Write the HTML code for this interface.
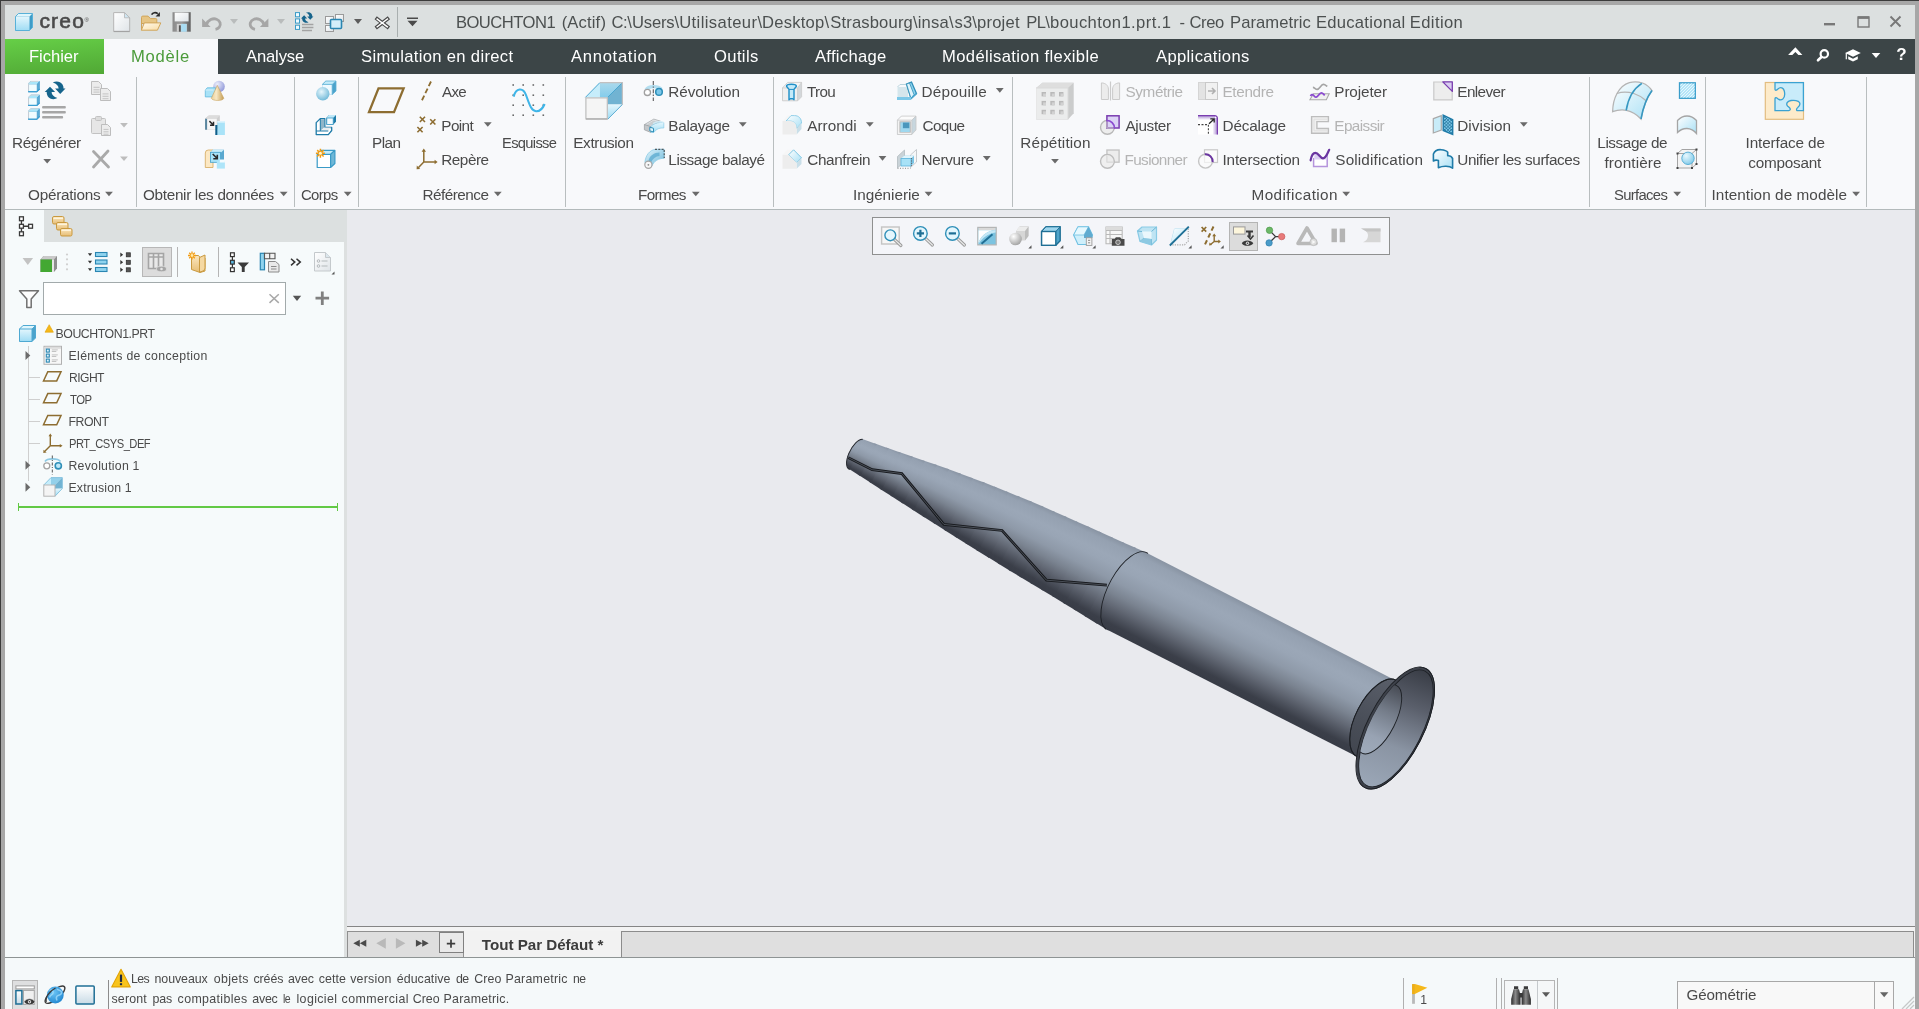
<!DOCTYPE html>
<html lang="fr"><head><meta charset="utf-8"><title>Creo Parametric</title>
<style>
html,body{margin:0;padding:0;}
body{width:1919px;height:1009px;overflow:hidden;position:relative;background:#a7a7a7;font-family:"Liberation Sans",sans-serif;}
.a{position:absolute;}
.t{position:absolute;white-space:pre;line-height:20px;height:20px;}
svg{position:absolute;left:0;top:0;}
</style></head><body>
<div class="a" style="left:0px;top:0px;width:1919px;height:1px;background:#3b3b3b;"></div>
<div class="a" style="left:0px;top:0px;width:1px;height:1009px;background:#3b3b3b;"></div>
<div class="a" style="left:5px;top:5px;width:1910px;height:34px;background:#dce0e0;"></div>
<div class="a" style="left:5px;top:39px;width:1910px;height:35px;background:#3c4547;"></div>
<div class="a" style="left:5px;top:39px;width:99px;height:35px;background:linear-gradient(175deg,#66cf47 0%,#5bbb3e 50%,#51a835 100%);"></div>
<div class="a" style="left:104px;top:39px;width:114px;height:36px;background:#f8f9fb;"></div>
<div class="a" style="left:5px;top:74px;width:1910px;height:135px;background:#f8f9fb;"></div>
<div class="a" style="left:5px;top:209px;width:1910px;height:1px;background:#b3babb;"></div>
<div class="a" style="left:136px;top:77px;width:1px;height:130px;background:#b9bebf;"></div>
<div class="a" style="left:294px;top:77px;width:1px;height:130px;background:#b9bebf;"></div>
<div class="a" style="left:358px;top:77px;width:1px;height:130px;background:#b9bebf;"></div>
<div class="a" style="left:565px;top:77px;width:1px;height:130px;background:#b9bebf;"></div>
<div class="a" style="left:773px;top:77px;width:1px;height:130px;background:#b9bebf;"></div>
<div class="a" style="left:1012px;top:77px;width:1px;height:130px;background:#b9bebf;"></div>
<div class="a" style="left:1589px;top:77px;width:1px;height:130px;background:#b9bebf;"></div>
<div class="a" style="left:1705px;top:77px;width:1px;height:130px;background:#b9bebf;"></div>
<div class="a" style="left:1866px;top:77px;width:1px;height:130px;background:#b9bebf;"></div>
<div class="a" style="left:5px;top:210px;width:340px;height:748px;background:#f6fafb;"></div>
<div class="a" style="left:44px;top:210px;width:303px;height:32px;background:#dce0e0;"></div>
<div class="a" style="left:344px;top:242px;width:3px;height:716px;background:#dde0e0;"></div>
<div class="a" style="left:347px;top:210px;width:1568px;height:716px;background:#e9eaee;"></div>
<div class="a" style="left:872px;top:217px;width:518px;height:38px;background:#f4f5f9;border:1px solid #8f9090;box-sizing:border-box;"></div>
<div class="a" style="left:1229px;top:222px;width:29px;height:29px;background:#dcdcdc;border:1px solid #b4b4b4;box-sizing:border-box;"></div>
<div class="a" style="left:142px;top:247px;width:30px;height:30px;background:#dcdcdc;border:1px solid #b7b7b7;box-sizing:border-box;"></div>
<div class="a" style="left:177px;top:247px;width:1px;height:30px;background:#b5b5b5;"></div>
<div class="a" style="left:218px;top:247px;width:1px;height:30px;background:#b5b5b5;"></div>
<div class="a" style="left:43px;top:282px;width:243px;height:33px;background:#ffffff;border:1px solid #a2aaab;box-sizing:border-box;"></div>
<div class="a" style="left:28px;top:346px;width:1px;height:135px;background:#cfcfcf;"></div>
<div class="a" style="left:28px;top:377px;width:12px;height:1px;background:#cfcfcf;"></div>
<div class="a" style="left:28px;top:399px;width:12px;height:1px;background:#cfcfcf;"></div>
<div class="a" style="left:28px;top:421px;width:12px;height:1px;background:#cfcfcf;"></div>
<div class="a" style="left:28px;top:443px;width:12px;height:1px;background:#cfcfcf;"></div>
<div class="a" style="left:18px;top:506px;width:320px;height:2px;background:#62c945;"></div>
<div class="a" style="left:18px;top:503px;width:1px;height:8px;background:#62c945;"></div>
<div class="a" style="left:337px;top:503px;width:1px;height:8px;background:#62c945;"></div>
<div class="a" style="left:347px;top:926px;width:1568px;height:1px;background:#858585;"></div>
<div class="a" style="left:347px;top:927px;width:1568px;height:4px;background:#f3f3f3;"></div>
<div class="a" style="left:347px;top:931px;width:1568px;height:27px;background:#f2f2f2;"></div>
<div class="a" style="left:347px;top:931px;width:117px;height:27px;background:#dedede;border:1px solid #909090;border-bottom:none;box-sizing:border-box;"></div>
<div class="a" style="left:439px;top:932px;width:25px;height:21px;background:#e9e9e9;border:1px solid #808080;box-sizing:border-box;"></div>
<div class="a" style="left:621px;top:931px;width:1293px;height:27px;background:#dfdfdf;border:1px solid #8c8c8c;border-bottom:none;box-sizing:border-box;"></div>
<div class="a" style="left:5px;top:957px;width:1910px;height:1px;background:#8e9494;"></div>
<div class="a" style="left:5px;top:958px;width:1910px;height:51px;background:#f5f9fa;"></div>
<div class="a" style="left:12px;top:980px;width:26px;height:29px;background:#dedfe0;border:1px solid #b5b5b5;border-bottom:none;box-sizing:border-box;"></div>
<div class="a" style="left:108px;top:980px;width:1px;height:29px;background:#8c8c8c;"></div>
<div class="a" style="left:1403px;top:978px;width:1px;height:31px;background:#b0b0b0;"></div>
<div class="a" style="left:1496px;top:978px;width:1px;height:31px;background:#b0b0b0;"></div>
<div class="a" style="left:1501px;top:978px;width:1px;height:31px;background:#b0b0b0;"></div>
<div class="a" style="left:1504px;top:980px;width:51px;height:29px;background:#f5f7f8;border:1px solid #b5b5b5;border-bottom:none;box-sizing:border-box;"></div>
<div class="a" style="left:1537px;top:981px;width:1px;height:28px;background:#c5c9cc;"></div>
<div class="a" style="left:1557px;top:978px;width:1px;height:31px;background:#b0b0b0;"></div>
<div class="a" style="left:1677px;top:981px;width:217px;height:28px;background:#f8f8f8;border:1px solid #a8a8a8;border-bottom:none;box-sizing:border-box;"></div>
<div class="a" style="left:1874px;top:982px;width:1px;height:27px;background:#a8a8a8;"></div>
<div class="a" id="txt" style="left:0;top:0;width:1919px;height:1009px;will-change:transform;">
<span class="t" style="left:455.90px;top:12.80px;font-size:16.6px;color:#4c5050;letter-spacing:-0.519px;">BOUCHTON1</span>
<span class="t" style="left:561.70px;top:12.80px;font-size:16.6px;color:#4c5050;letter-spacing:0.150px;">(Actif)</span>
<span class="t" style="left:611.40px;top:12.80px;font-size:16.6px;color:#4c5050;letter-spacing:-0.397px;">C:\</span>
<span class="t" style="left:631.90px;top:12.80px;font-size:16.6px;color:#4c5050;letter-spacing:-0.146px;">Users\</span>
<span class="t" style="left:679.20px;top:12.80px;font-size:16.6px;color:#4c5050;letter-spacing:0.402px;">Utilisateur\</span>
<span class="t" style="left:762.10px;top:12.80px;font-size:16.6px;color:#4c5050;letter-spacing:0.218px;">Desktop\</span>
<span class="t" style="left:830.20px;top:12.80px;font-size:16.6px;color:#4c5050;letter-spacing:0.163px;">Strasbourg\</span>
<span class="t" style="left:917.70px;top:12.80px;font-size:16.6px;color:#4c5050;letter-spacing:0.190px;">insa\</span>
<span class="t" style="left:954.60px;top:12.80px;font-size:16.6px;color:#4c5050;letter-spacing:0.087px;">s3\</span>
<span class="t" style="left:977.00px;top:12.80px;font-size:16.6px;color:#4c5050;letter-spacing:0.200px;">projet</span>
<span class="t" style="left:1026.20px;top:12.80px;font-size:16.6px;color:#4c5050;letter-spacing:-0.598px;">PL\</span>
<span class="t" style="left:1050.00px;top:12.80px;font-size:16.6px;color:#4c5050;letter-spacing:0.400px;">bouchton1.prt.1</span>
<span class="t" style="left:1179.40px;top:12.80px;font-size:16.6px;color:#4c5050;letter-spacing:0.000px;">-</span>
<span class="t" style="left:1189.50px;top:12.80px;font-size:16.6px;color:#4c5050;letter-spacing:-0.379px;">Creo</span>
<span class="t" style="left:1230.00px;top:12.80px;font-size:16.6px;color:#4c5050;letter-spacing:0.075px;">Parametric</span>
<span class="t" style="left:1316.00px;top:12.80px;font-size:16.6px;color:#4c5050;letter-spacing:0.257px;">Educational</span>
<span class="t" style="left:1409.80px;top:12.80px;font-size:16.6px;color:#4c5050;letter-spacing:0.382px;">Edition</span>
<span class="t" style="left:39.40px;top:10.60px;font-size:21px;color:#4a4a4a;letter-spacing:1.209px;-webkit-text-stroke:0.6px #4a4a4a;">creo</span>
<span class="t" style="left:84.60px;top:9.50px;font-size:6px;color:#4a4a4a;letter-spacing:0.000px;">®</span>
<span class="t" style="left:1896.30px;top:45.20px;font-size:17px;color:#ffffff;letter-spacing:0.000px;font-weight:700;">?</span>
<span class="t" style="left:29.00px;top:47.40px;font-size:16.6px;color:#ffffff;letter-spacing:-0.044px;">Fichier</span>
<span class="t" style="left:131.00px;top:47.40px;font-size:16.6px;color:#4b9b3a;letter-spacing:0.761px;">Modèle</span>
<span class="t" style="left:246.00px;top:47.40px;font-size:16.6px;color:#ffffff;letter-spacing:-0.134px;">Analyse</span>
<span class="t" style="left:361.00px;top:47.40px;font-size:16.6px;color:#ffffff;letter-spacing:0.336px;">Simulation en direct</span>
<span class="t" style="left:571.00px;top:47.40px;font-size:16.6px;color:#ffffff;letter-spacing:0.709px;">Annotation</span>
<span class="t" style="left:714.00px;top:47.40px;font-size:16.6px;color:#ffffff;letter-spacing:0.376px;">Outils</span>
<span class="t" style="left:815.00px;top:47.40px;font-size:16.6px;color:#ffffff;letter-spacing:0.293px;">Affichage</span>
<span class="t" style="left:942.00px;top:47.40px;font-size:16.6px;color:#ffffff;letter-spacing:0.365px;">Modélisation flexible</span>
<span class="t" style="left:1156.00px;top:47.40px;font-size:16.6px;color:#ffffff;letter-spacing:0.347px;">Applications</span>
<span class="t" style="left:12.00px;top:132.50px;font-size:15.3px;color:#4a4a4a;letter-spacing:-0.398px;">Régénérer</span>
<span class="t" style="left:28.00px;top:184.50px;font-size:15.3px;color:#4a4a4a;letter-spacing:-0.242px;">Opérations</span>
<span class="t" style="left:143.00px;top:184.50px;font-size:15.3px;color:#4a4a4a;letter-spacing:-0.320px;">Obtenir les données</span>
<span class="t" style="left:301.00px;top:184.50px;font-size:15.3px;color:#4a4a4a;letter-spacing:-0.689px;transform:scaleX(0.9765);transform-origin:0 50%;">Corps</span>
<span class="t" style="left:372.00px;top:132.50px;font-size:15.3px;color:#4a4a4a;letter-spacing:-0.536px;">Plan</span>
<span class="t" style="left:442.30px;top:81.60px;font-size:15.3px;color:#4a4a4a;letter-spacing:-0.689px;transform:scaleX(0.9888);transform-origin:0 50%;">Axe</span>
<span class="t" style="left:441.30px;top:115.50px;font-size:15.3px;color:#4a4a4a;letter-spacing:-0.604px;">Point</span>
<span class="t" style="left:441.30px;top:149.50px;font-size:15.3px;color:#4a4a4a;letter-spacing:-0.493px;">Repère</span>
<span class="t" style="left:501.84px;top:132.50px;font-size:15.3px;color:#4a4a4a;letter-spacing:-0.689px;transform:scaleX(0.9598);transform-origin:0 50%;">Esquisse</span>
<span class="t" style="left:422.50px;top:184.50px;font-size:15.3px;color:#4a4a4a;letter-spacing:-0.509px;">Référence</span>
<span class="t" style="left:573.30px;top:132.50px;font-size:15.3px;color:#4a4a4a;letter-spacing:-0.382px;">Extrusion</span>
<span class="t" style="left:668.30px;top:81.60px;font-size:15.3px;color:#4a4a4a;letter-spacing:-0.064px;">Révolution</span>
<span class="t" style="left:668.30px;top:115.50px;font-size:15.3px;color:#4a4a4a;letter-spacing:-0.297px;">Balayage</span>
<span class="t" style="left:668.30px;top:149.50px;font-size:15.3px;color:#4a4a4a;letter-spacing:-0.411px;">Lissage balayé</span>
<span class="t" style="left:638.30px;top:184.50px;font-size:15.3px;color:#4a4a4a;letter-spacing:-0.689px;transform:scaleX(0.9989);transform-origin:0 50%;">Formes</span>
<span class="t" style="left:807.30px;top:81.60px;font-size:15.3px;color:#4a4a4a;letter-spacing:-0.689px;transform:scaleX(0.9960);transform-origin:0 50%;">Trou</span>
<span class="t" style="left:807.30px;top:115.50px;font-size:15.3px;color:#4a4a4a;letter-spacing:0.014px;">Arrondi</span>
<span class="t" style="left:807.30px;top:149.50px;font-size:15.3px;color:#4a4a4a;letter-spacing:-0.390px;">Chanfrein</span>
<span class="t" style="left:921.50px;top:81.60px;font-size:15.3px;color:#4a4a4a;letter-spacing:0.191px;">Dépouille</span>
<span class="t" style="left:922.50px;top:115.50px;font-size:15.3px;color:#4a4a4a;letter-spacing:-0.642px;">Coque</span>
<span class="t" style="left:921.50px;top:149.50px;font-size:15.3px;color:#4a4a4a;letter-spacing:-0.316px;">Nervure</span>
<span class="t" style="left:853.00px;top:184.50px;font-size:15.3px;color:#4a4a4a;letter-spacing:-0.042px;">Ingénierie</span>
<span class="t" style="left:1020.30px;top:132.50px;font-size:15.3px;color:#4a4a4a;letter-spacing:0.147px;">Répétition</span>
<span class="t" style="left:1125.50px;top:81.60px;font-size:15.3px;color:#b4b4b4;letter-spacing:-0.406px;">Symétrie</span>
<span class="t" style="left:1125.50px;top:115.50px;font-size:15.3px;color:#4a4a4a;letter-spacing:-0.336px;">Ajuster</span>
<span class="t" style="left:1124.50px;top:149.50px;font-size:15.3px;color:#b4b4b4;letter-spacing:-0.616px;">Fusionner</span>
<span class="t" style="left:1222.50px;top:81.60px;font-size:15.3px;color:#b4b4b4;letter-spacing:-0.345px;">Etendre</span>
<span class="t" style="left:1222.50px;top:115.50px;font-size:15.3px;color:#4a4a4a;letter-spacing:-0.160px;">Décalage</span>
<span class="t" style="left:1222.50px;top:149.50px;font-size:15.3px;color:#4a4a4a;letter-spacing:-0.143px;">Intersection</span>
<span class="t" style="left:1334.30px;top:81.60px;font-size:15.3px;color:#4a4a4a;letter-spacing:-0.110px;">Projeter</span>
<span class="t" style="left:1334.30px;top:115.50px;font-size:15.3px;color:#b4b4b4;letter-spacing:-0.587px;">Epaissir</span>
<span class="t" style="left:1335.30px;top:149.50px;font-size:15.3px;color:#4a4a4a;letter-spacing:0.141px;">Solidification</span>
<span class="t" style="left:1457.30px;top:81.60px;font-size:15.3px;color:#4a4a4a;letter-spacing:-0.595px;">Enlever</span>
<span class="t" style="left:1457.30px;top:115.50px;font-size:15.3px;color:#4a4a4a;letter-spacing:0.022px;">Division</span>
<span class="t" style="left:1457.30px;top:149.50px;font-size:15.3px;color:#4a4a4a;letter-spacing:-0.380px;">Unifier les surfaces</span>
<span class="t" style="left:1251.50px;top:184.50px;font-size:15.3px;color:#4a4a4a;letter-spacing:0.399px;">Modification</span>
<span class="t" style="left:1597.30px;top:132.50px;font-size:15.3px;color:#4a4a4a;letter-spacing:-0.420px;">Lissage de</span>
<span class="t" style="left:1604.50px;top:152.50px;font-size:15.3px;color:#4a4a4a;letter-spacing:0.111px;">frontière</span>
<span class="t" style="left:1614.30px;top:184.50px;font-size:15.3px;color:#4a4a4a;letter-spacing:-0.689px;transform:scaleX(0.9696);transform-origin:0 50%;">Surfaces</span>
<span class="t" style="left:1745.50px;top:132.50px;font-size:15.3px;color:#4a4a4a;letter-spacing:-0.116px;">Interface de</span>
<span class="t" style="left:1748.30px;top:152.50px;font-size:15.3px;color:#4a4a4a;letter-spacing:-0.235px;">composant</span>
<span class="t" style="left:1711.50px;top:184.50px;font-size:15.3px;color:#4a4a4a;letter-spacing:0.063px;">Intention de modèle</span>
<span class="t" style="left:55.50px;top:324.10px;font-size:12.3px;color:#4a4a4a;letter-spacing:-0.438px;">BOUCHTON1.PRT</span>
<span class="t" style="left:68.50px;top:345.90px;font-size:12.3px;color:#4a4a4a;letter-spacing:0.361px;">Eléments de conception</span>
<span class="t" style="left:68.51px;top:367.80px;font-size:12.3px;color:#4a4a4a;letter-spacing:-0.553px;transform:scaleX(0.9851);transform-origin:0 50%;">RIGHT</span>
<span class="t" style="left:69.50px;top:389.70px;font-size:12.3px;color:#4a4a4a;letter-spacing:-0.553px;transform:scaleX(0.9222);transform-origin:0 50%;">TOP</span>
<span class="t" style="left:68.50px;top:411.60px;font-size:12.3px;color:#4a4a4a;letter-spacing:-0.459px;">FRONT</span>
<span class="t" style="left:68.59px;top:433.70px;font-size:12.3px;color:#4a4a4a;letter-spacing:-0.553px;transform:scaleX(0.9070);transform-origin:0 50%;">PRT_CSYS_DEF</span>
<span class="t" style="left:68.50px;top:455.60px;font-size:12.3px;color:#4a4a4a;letter-spacing:0.235px;">Revolution 1</span>
<span class="t" style="left:68.50px;top:477.60px;font-size:12.3px;color:#4a4a4a;letter-spacing:0.152px;">Extrusion 1</span>
<span class="t" style="left:481.80px;top:934.50px;font-size:15.2px;color:#3c3c3c;letter-spacing:-0.029px;font-weight:700;">Tout Par Défaut *</span>
<span class="t" style="left:130.70px;top:968.60px;font-size:12.4px;color:#4a4a4a;letter-spacing:-0.558px;transform:scaleX(0.9963);transform-origin:0 50%;">Les</span>
<span class="t" style="left:154.50px;top:968.60px;font-size:12.4px;color:#4a4a4a;letter-spacing:-0.063px;">nouveaux</span>
<span class="t" style="left:213.80px;top:968.60px;font-size:12.4px;color:#4a4a4a;letter-spacing:0.326px;">objets</span>
<span class="t" style="left:253.50px;top:968.60px;font-size:12.4px;color:#4a4a4a;letter-spacing:-0.101px;">créés</span>
<span class="t" style="left:288.00px;top:968.60px;font-size:12.4px;color:#4a4a4a;letter-spacing:-0.059px;">avec</span>
<span class="t" style="left:318.70px;top:968.60px;font-size:12.4px;color:#4a4a4a;letter-spacing:0.082px;">cette</span>
<span class="t" style="left:350.20px;top:968.60px;font-size:12.4px;color:#4a4a4a;letter-spacing:0.208px;">version</span>
<span class="t" style="left:396.70px;top:968.60px;font-size:12.4px;color:#4a4a4a;letter-spacing:0.081px;">éducative</span>
<span class="t" style="left:455.70px;top:968.60px;font-size:12.4px;color:#4a4a4a;letter-spacing:-0.558px;transform:scaleX(0.9975);transform-origin:0 50%;">de</span>
<span class="t" style="left:474.20px;top:968.60px;font-size:12.4px;color:#4a4a4a;letter-spacing:0.112px;">Creo</span>
<span class="t" style="left:505.50px;top:968.60px;font-size:12.4px;color:#4a4a4a;letter-spacing:0.233px;">Parametric</span>
<span class="t" style="left:572.50px;top:968.60px;font-size:12.4px;color:#4a4a4a;letter-spacing:-0.558px;transform:scaleX(0.9825);transform-origin:0 50%;">ne</span>
<span class="t" style="left:111.50px;top:988.70px;font-size:12.4px;color:#4a4a4a;letter-spacing:0.161px;">seront</span>
<span class="t" style="left:152.60px;top:988.70px;font-size:12.4px;color:#4a4a4a;letter-spacing:-0.141px;">pas</span>
<span class="t" style="left:177.60px;top:988.70px;font-size:12.4px;color:#4a4a4a;letter-spacing:0.348px;">compatibles</span>
<span class="t" style="left:252.20px;top:988.70px;font-size:12.4px;color:#4a4a4a;letter-spacing:-0.192px;">avec</span>
<span class="t" style="left:282.80px;top:988.70px;font-size:12.4px;color:#4a4a4a;letter-spacing:-0.558px;transform:scaleX(0.8483);transform-origin:0 50%;">le</span>
<span class="t" style="left:296.50px;top:988.70px;font-size:12.4px;color:#4a4a4a;letter-spacing:0.368px;">logiciel</span>
<span class="t" style="left:341.60px;top:988.70px;font-size:12.4px;color:#4a4a4a;letter-spacing:0.390px;">commercial</span>
<span class="t" style="left:412.70px;top:988.70px;font-size:12.4px;color:#4a4a4a;letter-spacing:0.012px;">Creo</span>
<span class="t" style="left:443.60px;top:988.70px;font-size:12.4px;color:#4a4a4a;letter-spacing:0.220px;">Parametric.</span>
<span class="t" style="left:1686.50px;top:985.30px;font-size:15.2px;color:#4a4a4a;letter-spacing:-0.119px;">Géométrie</span>
<span class="t" style="left:1420.30px;top:989.70px;font-size:12.2px;color:#4a4a4a;letter-spacing:0.000px;">1</span>
</div>
<svg width="1919" height="1009" viewBox="0 0 1919 1009"><defs>
<linearGradient id="gb" x1="0" y1="0" x2="0" y2="1"><stop offset="0" stop-color="#e3f6fd"/><stop offset="1" stop-color="#9fdcf4"/></linearGradient>
<linearGradient id="gb2" x1="0" y1="0" x2="1" y2="1"><stop offset="0" stop-color="#ffffff"/><stop offset="1" stop-color="#a9e0f5"/></linearGradient>
<linearGradient id="gB" x1="0" y1="0" x2="0" y2="1"><stop offset="0" stop-color="#7cc6e6"/><stop offset="1" stop-color="#3d97c2"/></linearGradient>
<linearGradient id="gw" x1="0" y1="0" x2="1" y2="1"><stop offset="0" stop-color="#ffffff"/><stop offset="1" stop-color="#dfe4e8"/></linearGradient>
<linearGradient id="gg" x1="0" y1="0" x2="0" y2="1"><stop offset="0" stop-color="#f4f4f4"/><stop offset="1" stop-color="#d2d2d2"/></linearGradient>
<linearGradient id="gt" x1="0" y1="0" x2="0" y2="1"><stop offset="0" stop-color="#fbe7c0"/><stop offset="1" stop-color="#e6bd74"/></linearGradient>
<linearGradient id="gp" x1="0" y1="0" x2="1" y2="0"><stop offset="0" stop-color="#ffffff"/><stop offset="1" stop-color="#b89ad8"/></linearGradient>
<radialGradient id="gs" cx="0.35" cy="0.3" r="0.8"><stop offset="0" stop-color="#e8f8fe"/><stop offset="1" stop-color="#7cc8e8"/></radialGradient>
<radialGradient id="gsg" cx="0.35" cy="0.3" r="0.8"><stop offset="0" stop-color="#ffffff"/><stop offset="1" stop-color="#9a9a9a"/></radialGradient>
<linearGradient id="mBody" gradientUnits="userSpaceOnUse" x1="0" y1="-40" x2="0" y2="40">
 <stop offset="0" stop-color="#8a95a4"/><stop offset="0.25" stop-color="#9ba7b7"/><stop offset="0.45" stop-color="#8f9aaa"/><stop offset="0.72" stop-color="#4a4f5a"/><stop offset="0.86" stop-color="#3a3e48"/><stop offset="1" stop-color="#4d525d"/></linearGradient>
</defs>
<g transform="translate(15,13)"><path d="M0.5 3.5L3.5 0.5H17.5V14.5L14.5 17.5H0.5z" fill="#3f9cc7"/><path d="M0.5 3.5L3.5 0.5H17.5L14.5 3.5z" fill="#dff6fd"/><rect x="0.5" y="3.5" width="14" height="14" fill="url(#gb)"/><path d="M0.5 3.5L3.5 0.5H17.5V14.5L14.5 17.5H0.5z" fill="none" stroke="#58b1d8" stroke-width="1"/></g>
<path d="M113.700 12.600H124.500L129.700 17.800V31.300H113.700z" fill="url(#gw)" stroke="#b4b4b4" stroke-width="1"/><path d="M124.500 12.600V17.800H129.700z" fill="#cfe6f2" stroke="#b4b4b4" stroke-width=".8"/><path d="M113.700 31.600H129.700" stroke="#a0a0a0" stroke-width="1"/>
<path d="M141.500 30.200V17.400Q141.500 16.100 142.800 16.100H148L150.500 18.600H155.800Q156.800 18.600 156.800 19.600V23.500H141.500z" fill="#e6c585" stroke="#d0a55a" stroke-width="1"/><linearGradient id="gfl" x1="0" y1="0" x2="1" y2="1"><stop offset="0" stop-color="#fffaee"/><stop offset="1" stop-color="#f8dca4"/></linearGradient><path d="M144.300 22.900H160.800L157.400 30.200H141.400z" fill="url(#gfl)" stroke="#d0a55a" stroke-width="1" stroke-linejoin="round"/><path d="M151.600 14.600C152.800 12.600 155.500 12 157.800 13.600" fill="none" stroke="#2a2a2a" stroke-width="1.700"/><path d="M155.600 16.400H159.900V12.100z" fill="#2a2a2a"/>
<linearGradient id="gsv" x1="0" y1="0" x2="1" y2="0"><stop offset="0" stop-color="#8c8c8c"/><stop offset="0.5" stop-color="#9a9a9a"/><stop offset="1" stop-color="#5e5e5e"/></linearGradient><path d="M172.500 12.200H190.700V31.700H172.500z" fill="url(#gsv)"/><rect x="174.700" y="12.700" width="13.900" height="8.700" fill="url(#gw)"/><rect x="176.800" y="23.900" width="10" height="7.800" fill="#d2d2d2"/><rect x="178.900" y="25.300" width="1.900" height="6.400" fill="#555"/><rect x="181.100" y="23.900" width="5.500" height="7.800" fill="#a9dcf2"/>
<path d="M206.500 24.500C208 19.800 213 17.900 216.500 19.200C220.300 20.700 221.300 24.600 219.300 27.200C218.400 28.400 217 29.100 215.500 29.400" fill="none" stroke="#a6a6a6" stroke-width="2.800"/><path d="M202.100 18.600V26.900H210.600z" fill="#a6a6a6"/>
<g transform="translate(470.500 0) scale(-1 1)"><path d="M206.500 24.500C208 19.800 213 17.900 216.500 19.200C220.300 20.700 221.300 24.600 219.300 27.200C218.400 28.400 217 29.100 215.500 29.400" fill="none" stroke="#a6a6a6" stroke-width="2.800"/><path d="M202.100 18.600V26.900H210.600z" fill="#a6a6a6"/></g>
<path d="M230.00 19.10h8l-4.00 4.8z" fill="#b9bcbc"/>
<path d="M277.00 19.10h8l-4.00 4.8z" fill="#b9bcbc"/>
<rect x="295.500" y="12.6" width="4" height="4.200" fill="#effbff" stroke="#3a9bc7" stroke-width="1"/><rect x="295.500" y="18.9" width="4" height="4.200" fill="#effbff" stroke="#3a9bc7" stroke-width="1"/><rect x="295.500" y="25.2" width="4" height="4.200" fill="#effbff" stroke="#3a9bc7" stroke-width="1"/><path d="M302 24.500h11.400M302 27.600h11.400M302 30.600h10" stroke="#a3a3a3" stroke-width="1.500"/><g transform="translate(307.200 17.500) scale(0.600) translate(-55.100 -90.350)"><path d="M52.8 82.6C56 80.7 60.5 81.4 62.5 84.5C63.3 85.8 63.6 87.2 63.5 88.6L65.5 88.6L60.2 93.9L55.1 88.6L58.6 88.6C58.6 86 56.5 83.6 52.8 82.6Z" fill="#16648c"/><path d="M52.8 82.6C56 80.7 60.5 81.4 62.5 84.5C63.3 85.8 63.6 87.2 63.5 88.6L65.5 88.6L60.2 93.9L55.1 88.6L58.6 88.6C58.6 86 56.5 83.6 52.8 82.6Z" fill="#16648c" transform="rotate(180 55.1 90.35)"/></g>
<g transform="translate(325,14)"><rect x="0.5" y="2.5" width="8" height="7" fill="url(#gw)" stroke="#9a9a9a"/><rect x="10.5" y="0.5" width="8" height="7" fill="url(#gw)" stroke="#9a9a9a"/><rect x="0.5" y="11.5" width="8" height="6" fill="url(#gw)" stroke="#9a9a9a"/><rect x="5.5" y="5.5" width="11" height="9" rx="1" fill="#d3eefa" stroke="#2a86b2" stroke-width="1.6"/></g>
<path d="M354.00 19.10h8l-4.00 4.8z" fill="#5c5c5c"/>
<g transform="translate(375,17)"><path d="M2.200 2L12.400 9.800M12.400 2L2.200 9.800" stroke="#4a4a4a" stroke-width="3.800" stroke-linecap="square"/><path d="M2.200 2L12.400 9.800M12.400 2L2.200 9.800" stroke="#ffffff" stroke-width="1.500" stroke-linecap="square"/></g>
<rect x="397" y="7" width="1" height="30" fill="#a9afaf"/>
<rect x="407" y="17.5" width="11" height="1.5" fill="#4a4a4a"/>
<path d="M407.50 20.75h10l-5.00 5.5z" fill="#4a4a4a"/>
<rect x="1824" y="23" width="11" height="2.4" fill="#787878"/>
<rect x="1858" y="17" width="11" height="10" fill="none" stroke="#787878" stroke-width="1.4"/><rect x="1858" y="16.3" width="11" height="2.6" fill="#787878"/>
<path d="M1890.5 16.5L1900.5 26.5M1900.5 16.5L1890.5 26.5" stroke="#787878" stroke-width="1.9"/>
<path d="M1788.1 54.9L1795.4 47.3L1802.400 54.900H1798.400L1795.400 52L1792.300 54.900z" fill="#ffffff"/>
<circle cx="1824.300" cy="53.900" r="3.700" fill="none" stroke="#ffffff" stroke-width="2.200"/><path d="M1821.400 57L1818 60.300" stroke="#ffffff" stroke-width="2.600" stroke-linecap="round"/>
<path d="M1845.200 53L1853 49.200 1860.800 53 1853 56.800z" fill="#ffffff"/><path d="M1848.200 56.300V59.200L1853 61.600 1857.800 59.200V56.300L1853 58.700z" fill="#ffffff"/><rect x="1845.700" y="53" width="1.200" height="6.300" fill="#ffffff"/>
<path d="M1871.70 52.90h8.6l-4.30 5.2z" fill="#ffffff"/>
<path d="M43.30 159.00h7.8l-3.90 4.6z" fill="#6a6a6a"/>
<path d="M1051.10 159.00h7.8l-3.90 4.6z" fill="#6a6a6a"/>
<path d="M105.10 191.70h7.8l-3.90 4.6z" fill="#6a6a6a"/>
<path d="M279.80 191.70h7.8l-3.90 4.6z" fill="#6a6a6a"/>
<path d="M343.80 191.70h7.8l-3.90 4.6z" fill="#6a6a6a"/>
<path d="M493.90 191.70h7.8l-3.90 4.6z" fill="#6a6a6a"/>
<path d="M691.90 191.70h7.8l-3.90 4.6z" fill="#6a6a6a"/>
<path d="M924.60 191.70h7.8l-3.90 4.6z" fill="#6a6a6a"/>
<path d="M1342.30 191.70h7.8l-3.90 4.6z" fill="#6a6a6a"/>
<path d="M1673.30 191.70h7.8l-3.90 4.6z" fill="#6a6a6a"/>
<path d="M1852.20 191.70h7.8l-3.90 4.6z" fill="#6a6a6a"/>
<path d="M483.90 122.20h7.8l-3.90 4.6z" fill="#6a6a6a"/>
<path d="M738.90 122.20h7.8l-3.90 4.6z" fill="#6a6a6a"/>
<path d="M865.90 122.20h7.8l-3.90 4.6z" fill="#6a6a6a"/>
<path d="M878.60 156.10h7.8l-3.90 4.6z" fill="#6a6a6a"/>
<path d="M995.90 88.10h7.8l-3.90 4.6z" fill="#6a6a6a"/>
<path d="M982.90 156.10h7.8l-3.90 4.6z" fill="#6a6a6a"/>
<path d="M1519.90 122.20h7.8l-3.90 4.6z" fill="#6a6a6a"/>
<path d="M120.10 122.90h7.8l-3.90 4.6z" fill="#bdbdbd"/>
<path d="M120.10 156.40h7.8l-3.90 4.6z" fill="#bdbdbd"/>
<path d="M28.2 83.6L30.8 81.0H39.6V89.6L36.8 92.3H28.2z" fill="#3f93c4"/><path d="M28.2 83.6L30.8 81.0H39.6L36.8 84.4H28.2z" fill="#a9e6fa"/><path d="M36.8 84.4L39.6 81.4V89.6L36.8 92.3z" fill="#5aaad4"/><rect x="28.7" y="84.4" width="8.1" height="7.2" fill="#f0fcff"/><path d="M28.599999999999998 91.2V83.8L31.0 81.4H38.2" fill="none" stroke="#d9d2d2" stroke-width=".8"/><path d="M28.2 91.7H36.8L39.6 89.0" fill="none" stroke="#3a9fd3" stroke-width="1.3"/><path d="M28.2 97.3L30.8 94.7H39.6V103.3L36.8 106.0H28.2z" fill="#3f93c4"/><path d="M28.2 97.3L30.8 94.7H39.6L36.8 98.10000000000001H28.2z" fill="#a9e6fa"/><path d="M36.8 98.10000000000001L39.6 95.10000000000001V103.3L36.8 106.0z" fill="#5aaad4"/><rect x="28.7" y="98.10000000000001" width="8.1" height="7.2" fill="#f0fcff"/><path d="M28.599999999999998 104.9V97.5L31.0 95.10000000000001H38.2" fill="none" stroke="#d9d2d2" stroke-width=".8"/><path d="M28.2 105.4H36.8L39.6 102.7" fill="none" stroke="#3a9fd3" stroke-width="1.3"/><path d="M28.2 111.0L30.8 108.4H39.6V117.0L36.8 119.7H28.2z" fill="#3f93c4"/><path d="M28.2 111.0L30.8 108.4H39.6L36.8 111.80000000000001H28.2z" fill="#a9e6fa"/><path d="M36.8 111.80000000000001L39.6 108.80000000000001V117.0L36.8 119.7z" fill="#5aaad4"/><rect x="28.7" y="111.80000000000001" width="8.1" height="7.2" fill="#f0fcff"/><path d="M28.599999999999998 118.60000000000001V111.2L31.0 108.80000000000001H38.2" fill="none" stroke="#d9d2d2" stroke-width=".8"/><path d="M28.2 119.10000000000001H36.8L39.6 116.4" fill="none" stroke="#3a9fd3" stroke-width="1.3"/><rect x="42.1" y="106.1" width="23.699999999999996" height="2.5" rx=".8" fill="#a6a6a6"/><rect x="42.1" y="111.1" width="23.699999999999996" height="2.5" rx=".8" fill="#a6a6a6"/><rect x="42.1" y="116.1" width="21.0" height="2.5" rx=".8" fill="#a6a6a6"/><path d="M52.8 82.6C56 80.7 60.5 81.4 62.5 84.5C63.3 85.8 63.6 87.2 63.5 88.6L65.5 88.6L60.2 93.9L55.1 88.6L58.6 88.6C58.6 86 56.5 83.6 52.8 82.6Z" fill="#16648c"/><path d="M52.8 82.6C56 80.7 60.5 81.4 62.5 84.5C63.3 85.8 63.6 87.2 63.5 88.6L65.5 88.6L60.2 93.9L55.1 88.6L58.6 88.6C58.6 86 56.5 83.6 52.8 82.6Z" fill="#16648c" transform="rotate(180 55.1 90.35)"/>
<path d="M91.5 81.5H98.5L101.5 84.5V94.5H91.5z" fill="#ececec" stroke="#bdbdbd"/><path d="M93.5 87.3H99.5" stroke="#c4c4c4" stroke-width="1"/><path d="M93.5 89.8H99.5" stroke="#c4c4c4" stroke-width="1"/><path d="M93.5 92.1H99.5" stroke="#c4c4c4" stroke-width="1"/><path d="M100.5 88.5H107.5L110.5 91.5V100.5H100.5z" fill="#ececec" stroke="#bdbdbd"/><path d="M102.5 93.9H108.5" stroke="#c4c4c4" stroke-width="1"/><path d="M102.5 96.3H108.5" stroke="#c4c4c4" stroke-width="1"/><path d="M102.5 98.7H108.5" stroke="#c4c4c4" stroke-width="1"/>
<rect x="91.5" y="118.5" width="14" height="15" rx="1" fill="#e6e6e6" stroke="#c2c2c2"/><rect x="95.5" y="116.5" width="6" height="4" rx="1" fill="#dcdcdc" stroke="#c2c2c2"/><path d="M101.5 124.5H107.5L110.5 127.5V135.5H101.5z" fill="#ececec" stroke="#bdbdbd"/><path d="M103.5 129.4H108.5" stroke="#c4c4c4" stroke-width="1"/><path d="M103.5 131.8H108.5" stroke="#c4c4c4" stroke-width="1"/><path d="M103.5 134.2H108.5" stroke="#c4c4c4" stroke-width="1"/>
<path d="M93.5 151.5L108.5 167M108 151L93.5 167" stroke="#a9a9a9" stroke-width="2.8" stroke-linecap="round"/>
<radialGradient id="glil" cx="0.35" cy="0.3" r="0.8"><stop offset="0" stop-color="#eceefb"/><stop offset="1" stop-color="#8a92d6"/></radialGradient><linearGradient id="gcone" x1="0" y1="0" x2="1" y2="0"><stop offset="0" stop-color="#e9cf9a"/><stop offset="0.4" stop-color="#f8e8c4"/><stop offset="1" stop-color="#c39c52"/></linearGradient><circle cx="219" cy="86.5" r="5.8" fill="url(#glil)"/><path d="M205.3 90L207.200 87.800H215.500V96.900H205.300z" fill="#a8e2f7" stroke="#62b9de" stroke-width=".8"/><path d="M205.300 90H213.500" stroke="#dff5fd" stroke-width=".8"/><path d="M217.300 85.400L223.800 98.300C223 101.200 212.500 101.200 211.300 98.300z" fill="url(#gcone)" stroke="#c9a35c" stroke-width=".6"/>
<path d="M205.100 118.600L208.800 115.500H219.800V126.500L216.800 129.700H205.100z" fill="#cfcfcf"/><rect x="207" y="118.600" width="9.800" height="11" fill="#f6f6f6"/><path d="M205.100 118.600h2v11.100h-2z" fill="#5a86a0"/><path d="M205.100 118.600L208.800 115.500H219.800L216.800 118.600z" fill="#dcdcdc"/><path d="M209.400 121.100L213.300 125M213.500 121.800V125.300H210" stroke="#2a2a2a" stroke-width="1.500" fill="none"/><rect x="217.300" y="121.100" width="7.600" height="13.900" fill="#a9e3f8"/><rect x="217.300" y="121.100" width="7.600" height="1.500" fill="#e3f6fd"/><rect x="215.300" y="125" width="2.100" height="10" fill="#0f5f8a"/>
<path d="M205.300 153Q205.300 150 208.300 150H213V167.500H205.300z" fill="#fce8c3" stroke="#d8b06a" stroke-width=".9"/><path d="M210.400 152.300L212.800 149.800H224V159.800L221.300 162.300H210.400z" fill="#5aa8cf"/><path d="M210.400 152.300L212.800 149.800H224L221.300 152.300z" fill="#c9edfa"/><rect x="210.400" y="152.300" width="10.200" height="10" fill="#a9e3f8" stroke="#4aa3cc" stroke-width=".8"/><rect x="216.800" y="160.800" width="8.100" height="7.800" fill="#aee5f9"/><path d="M219.800 159.500h5.100v3h-5.100z" fill="#f3fbfe"/><path d="M212.700 154L217 158.300M217.300 154.800V158.700H213.300" stroke="#2a2a2a" stroke-width="1.600" fill="none"/>
<path d="M322.300 84.400L325.800 81H336V91L332.200 94.600H322.300z" fill="#4da3cb"/><path d="M322.300 84.400L325.800 81H336L332.200 84.400z" fill="#c4ebf9"/><rect x="322.300" y="84.400" width="9.900" height="10.200" fill="#f0faff"/><path d="M322.300 84.400L325.800 81H336V91L332.200 94.600M322.300 84.400H332.200V94.600M332.200 84.400L336 81" fill="none" stroke="#5bb0d6" stroke-width=".8"/><radialGradient id="gsp2" cx="0.4" cy="0.35" r="0.75"><stop offset="0" stop-color="#e6f6fc"/><stop offset="1" stop-color="#63b2d4"/></radialGradient><circle cx="322.800" cy="93.800" r="6.700" fill="url(#gsp2)"/>
<path d="M316.200 122.600L320.300 118.600H324.800V127.500H331.700V130.500L328.300 134.600H316.200z" fill="#ffffff" stroke="#1f7ba8" stroke-width="1.300" stroke-linejoin="round"/><path d="M320.300 119.300H324.200V127.500L320.300 131z" fill="#8fb5c8"/><path d="M320.300 131L324.200 127.500H331.200L328 131z" fill="#e9eef0"/><path d="M316.200 131H328.300M320.300 118.600V131" stroke="#1f7ba8" stroke-width="1" fill="none"/><path d="M326.300 118L329 115.100H336V121.800L333.200 124.500H326.300z" fill="#1f7ba8"/><path d="M326.300 118L329 115.100H336L333.200 118z" fill="#bfe8f8"/><rect x="326.800" y="118" width="6.400" height="6.500" fill="#f3fbff" stroke="#3a9bc7" stroke-width=".8"/>
<path d="M317.200 154.300L320.800 150.300H334.900V163.500L330.600 167.500H317.200z" fill="#6fb7d6"/><path d="M317.200 154.300L320.800 150.300H334.900L330.600 154.300z" fill="#c4ebf9"/><rect x="317.200" y="154.300" width="13.400" height="13.200" fill="#ffffff"/><path d="M317.200 154.300L320.800 150.300H334.900V163.500L330.600 167.500H317.200zM317.200 154.300H330.600V167.500M330.600 154.300L334.900 150.300" fill="none" stroke="#3a9bc7" stroke-width="1.200" stroke-linejoin="round"/><path d="M320.400 148.800v9M315.900 153.300h9M317.200 150.100l6.400 6.400M323.600 150.100l-6.400 6.400" stroke="#f39c12" stroke-width="1.500"/><circle cx="320.400" cy="153.300" r="1.500" fill="#fff4cc"/>
<path d="M378.5 88.4H403.6L394 112.1H369z" fill="none" stroke="#8d6d31" stroke-width="2.3"/>
<path d="M431 81.5L421.8 100.6" stroke="#8d6d31" stroke-width="1.8" stroke-dasharray="5.2 2.6"/>
<path d="M419.79999999999995 116.80000000000001l5.2 5.2M425.0 116.80000000000001l-5.2 5.2" stroke="#8d6d31" stroke-width="1.6"/>
<path d="M430.2 119.30000000000001l5.2 5.2M435.40000000000003 119.30000000000001l-5.2 5.2" stroke="#8d6d31" stroke-width="1.6"/>
<path d="M417.4 127.0l5.2 5.2M422.6 127.0l-5.2 5.2" stroke="#8d6d31" stroke-width="1.6"/>
<path d="M423.8 150.5V162H435.5M423.8 162L418.3 167.8" fill="none" stroke="#8d6d31" stroke-width="1.5"/><path d="M421.6 151.8L423.8 148.6 426 151.8zM434.6 159.8L437.6 162 434.6 164.2zM416.8 165.6L416.6 169.3 420.2 169z" fill="#8d6d31"/>
<rect x="512.4000000000001" y="84.2" width="1.6" height="1.6" fill="#6a6a6a"/><rect x="512.4000000000001" y="94.4" width="1.6" height="1.6" fill="#6a6a6a"/><rect x="512.4000000000001" y="104.4" width="1.6" height="1.6" fill="#6a6a6a"/><rect x="512.4000000000001" y="114.4" width="1.6" height="1.6" fill="#6a6a6a"/><rect x="522.4000000000001" y="84.2" width="1.6" height="1.6" fill="#6a6a6a"/><rect x="522.4000000000001" y="94.4" width="1.6" height="1.6" fill="#6a6a6a"/><rect x="522.4000000000001" y="104.4" width="1.6" height="1.6" fill="#6a6a6a"/><rect x="522.4000000000001" y="114.4" width="1.6" height="1.6" fill="#6a6a6a"/><rect x="532.5" y="84.2" width="1.6" height="1.6" fill="#6a6a6a"/><rect x="532.5" y="94.4" width="1.6" height="1.6" fill="#6a6a6a"/><rect x="532.5" y="104.4" width="1.6" height="1.6" fill="#6a6a6a"/><rect x="532.5" y="114.4" width="1.6" height="1.6" fill="#6a6a6a"/><rect x="542.5" y="84.2" width="1.6" height="1.6" fill="#6a6a6a"/><rect x="542.5" y="94.4" width="1.6" height="1.6" fill="#6a6a6a"/><rect x="542.5" y="104.4" width="1.6" height="1.6" fill="#6a6a6a"/><rect x="542.5" y="114.4" width="1.6" height="1.6" fill="#6a6a6a"/><path d="M513.6 96.6C516 88 523 87 526 95C529 103 531 111 536 111.2C540 111.4 543 108 544.6 104" fill="none" stroke="#3fb5e8" stroke-width="2.1"/>
<linearGradient id="gex" x1="0" y1="0" x2="0" y2="1"><stop offset="0" stop-color="#abd9ec"/><stop offset="1" stop-color="#84cceb"/></linearGradient><path d="M585.4 97.4L599.9 82.6V97.4z" fill="#c6edfb"/><path d="M599.9 82.6H622.4L607.6 97.4H599.9z" fill="url(#gex)"/><path d="M607.6 97.4L622.4 82.6V104.4L607.6 104.6z" fill="#71b3d2"/><path d="M607.6 104.6H621.6L607.6 118.8z" fill="url(#gb)"/><path d="M585.4 97.4L599.9 82.6M607.6 97.4L622.4 82.6M607.6 119.3L622.4 104.4" fill="none" stroke="#4aa6d0" stroke-width="1"/><path d="M599.9 82.6H622.4V104.4" fill="none" stroke="#c2c0c0" stroke-width="1.2"/><rect x="585.9" y="97.9" width="21.4" height="21" fill="#f5f5f5" stroke="#bdbdbd" stroke-width="1.2"/><path d="M586 119H607.3" stroke="#a9a9a9" stroke-width="1.2"/>
<path d="M646.0 89.8C648.5 85.6 658.0 85.6 661.3 89.2" fill="none" stroke="#b3def0" stroke-width="3.2"/><circle cx="647.4" cy="92.4" r="3.1" fill="#ffffff" stroke="#a0a0a0" stroke-width="1.3"/><circle cx="659.0" cy="91.9" r="3.3" fill="#7cc8ea" stroke="#2f8fb8" stroke-width="1.5"/><path d="M653.3 81V101" stroke="#5a5a5a" stroke-width="1.1" stroke-dasharray="4 1.4 1.4 1.4"/>
<path d="M644.400 124.600L653.800 119.100L660.300 121.100L651 126.600z" fill="#e3e5e7" stroke="#a9adb0" stroke-width=".8"/><path d="M646.600 124.600L653.800 120.500L658 121.800L651 125.800z" fill="#c9cdd0"/><path d="M644.400 124.600L651 126.600V132.500L644.400 129.800z" fill="#c3c7ca" stroke="#9ea2a5" stroke-width=".8"/><path d="M651 126.300C654.500 123 660 122 663.800 122.600V128C660 127.600 656 129 654 132.300L651 132.500z" fill="url(#gb)" stroke="#8ccbe6" stroke-width=".7"/><path d="M653 123.600C656 121.600 660.500 121.200 663.800 122.600" fill="none" stroke="#cfeaf5" stroke-width="1.200"/><path d="M649.800 127.200L653.500 128.300V132L649.800 130.800z" fill="#dff4fc" stroke="#2f8fb8" stroke-width="1"/>
<linearGradient id="glb" x1="0" y1="0" x2="1" y2="1"><stop offset="0" stop-color="#e3f5fc"/><stop offset="1" stop-color="#6bb8da"/></linearGradient><path d="M644.900 162.500C645.500 155.500 649.500 150 655.500 149.300H664.200V158.300C658.500 158.300 654 161 651.900 166z" fill="url(#glb)" stroke="#8ccbe6" stroke-width=".8"/><path d="M648.500 160.500C650 155.500 654 152.800 659.500 152.600V156C656 156.300 652.500 158.500 651 163z" fill="#5aa9cf" opacity=".75"/><path d="M655 149.300H664.200V158" fill="none" stroke="#3a3a3a" stroke-width="1" stroke-dasharray="2 1.300"/><circle cx="648.400" cy="164.800" r="3.600" fill="#f7f7f7" stroke="#a5a5a5" stroke-width="1.200"/><circle cx="648.400" cy="164.800" r=".9" fill="#8a8a8a"/>
<path d="M782.500 87.900L787.700 82.400H801.600V96.800L797.600 100.800H782.500z" fill="#d3d7da"/><path d="M782.500 87.900L787.700 82.400H801.600L797.600 87.900z" fill="#f4f4f4"/><rect x="782.500" y="87.900" width="15.100" height="12.900" fill="#efefef"/><path d="M782.500 87.900L787.700 82.400H801.600V96.800L797.600 100.800H782.500zM782.500 87.900H797.600V100.800M797.600 87.900L801.600 82.400" fill="none" stroke="#c9c9c9" stroke-width=".8"/><path d="M786.500 86.300C786.500 84.600 788.500 84.300 791.400 84.300S796.400 84.600 796.400 86.300L794 89.400V99.800L792.600 98.800H790.400L789 99.800V89.400z" fill="#c4eaf9" stroke="#1f8fc8" stroke-width="1.400" stroke-linejoin="round"/><path d="M789 89.400H794" stroke="#1f8fc8" stroke-width="1"/>
<path d="M782.500 121.100L787.500 115.600H791L786 121.100z" fill="#f6f6f6"/><path d="M786 121.100L791 115.600H794.500C798.800 115.600 801.500 118.500 801.500 123L796.600 128.500C796.600 124 794 121.100 790 121.100z" fill="url(#gb2)" stroke="#7cc5e3" stroke-width=".8"/><path d="M796.600 128.500L801.500 123V129L796.600 134.500z" fill="#c9dfe9"/><path d="M782.500 121.100H790C794 121.100 796.600 124 796.600 128.500V134.500H782.500z" fill="#ededed"/>
<path d="M782.500 154.800L787.100 149.800H793.600L788.600 154.800z" fill="#f6f6f6"/><path d="M788.600 154.800L793.600 149.800L801.500 157.800L796.600 162.500z" fill="url(#gb2)" stroke="#6fbfe0" stroke-width=".9"/><path d="M796.600 162.500L801.500 157.800V164L796.600 168.700z" fill="#c9dfe9"/><path d="M782.500 154.800H788.600L796.600 162.500V168.700H782.500z" fill="#ededed"/>
<path d="M897.5 87H908V98H897.5z" fill="#d5e6ec"/><path d="M897.5 87L900 84.5H910" fill="none" stroke="#b7d3dd"/><path d="M906.5 84L911.5 82 916.5 93.5 911 98.5z" fill="#8fd3ee" stroke="#2f8fb8" stroke-width="1.3"/><path d="M906.5 84L909.5 83 914 94.5 911 98.5z" fill="#dff4fc" stroke="#2f8fb8" stroke-width=".8"/><path d="M897 98.5H911L916.5 93.5" fill="none" stroke="#4da8d0" stroke-width="1.4"/><rect x="897" y="97" width="14" height="3" fill="#7cc8e8"/>
<path d="M897.400 120.100L901.400 116.100H916V130L911.800 134.500H897.400z" fill="#c7d6de"/><path d="M897.400 120.100L901.400 116.100H916L911.800 120.100z" fill="#fbfbfb"/><rect x="897.400" y="120.100" width="14.400" height="14.400" fill="#f3f3f3"/><path d="M897.400 120.100L901.400 116.100H916V130L911.800 134.500H897.400zM897.400 120.100H911.800V134.500M911.800 120.100L916 116.100" fill="none" stroke="#c6c6c6" stroke-width=".8"/><rect x="899.400" y="121.300" width="11.400" height="11.400" fill="#b9b9b9"/><rect x="900.400" y="122.300" width="9.400" height="9.700" fill="#9fd8ef"/><rect x="902.900" y="122.600" width="6.400" height="5.600" fill="#4a97bd"/>
<path d="M897.500 156.500L904.500 150V161.500L897.500 168z" fill="#c9d3d8" stroke="#aeb6ba" stroke-width=".7"/><path d="M910.500 155L916.500 149.500V162L910.500 167.500z" fill="#f6f7f8" stroke="#b9bec1" stroke-width=".8"/><path d="M897.500 168.300H910.500" stroke="#8a8a8a" stroke-width="1" stroke-dasharray="1 1.500"/><path d="M901 158.500L904 155.800H914V163L911 166H901z" fill="#7cc4e4"/><path d="M901 158.500L904 155.800H914L911 158.500z" fill="#dff4fc"/><rect x="901" y="158.500" width="10" height="7.500" fill="#a8e2f7" stroke="#5cb5dc" stroke-width=".8"/><path d="M911.500 158V166" stroke="#6a6a6a" stroke-width="1" stroke-dasharray="1.200 1.200"/>
<path d="M1036.2 88L1042.4 82.7H1073.7V113.2L1068 119.4H1036.2z" fill="#cbcccc"/><path d="M1036.2 88L1042.4 82.7H1073.7L1068 88z" fill="#dedede"/><rect x="1036.2" y="88" width="31.8" height="31.4" fill="#ebecec"/><path d="M1036.2 88H1068V119.4" fill="none" stroke="#dadada"/><rect x="1041.6" y="92.0" width="4.4" height="4.4" fill="#b9b9b9"/><rect x="1043.1" y="93.5" width="2.9" height="2.9" fill="#d2d2d2"/><rect x="1041.6" y="100.89999999999999" width="4.4" height="4.4" fill="#b9b9b9"/><rect x="1043.1" y="102.39999999999999" width="2.9" height="2.9" fill="#d2d2d2"/><rect x="1041.6" y="109.8" width="4.4" height="4.4" fill="#b9b9b9"/><rect x="1043.1" y="111.3" width="2.9" height="2.9" fill="#d2d2d2"/><rect x="1050.3" y="92.0" width="4.4" height="4.4" fill="#b9b9b9"/><rect x="1051.8" y="93.5" width="2.9" height="2.9" fill="#d2d2d2"/><rect x="1050.3" y="100.89999999999999" width="4.4" height="4.4" fill="#b9b9b9"/><rect x="1051.8" y="102.39999999999999" width="2.9" height="2.9" fill="#d2d2d2"/><rect x="1050.3" y="109.8" width="4.4" height="4.4" fill="#b9b9b9"/><rect x="1051.8" y="111.3" width="2.9" height="2.9" fill="#d2d2d2"/><rect x="1059.0" y="92.0" width="4.4" height="4.4" fill="#b9b9b9"/><rect x="1060.5" y="93.5" width="2.9" height="2.9" fill="#d2d2d2"/><rect x="1059.0" y="100.89999999999999" width="4.4" height="4.4" fill="#b9b9b9"/><rect x="1060.5" y="102.39999999999999" width="2.9" height="2.9" fill="#d2d2d2"/><rect x="1059.0" y="109.8" width="4.4" height="4.4" fill="#b9b9b9"/><rect x="1060.5" y="111.3" width="2.9" height="2.9" fill="#d2d2d2"/>
<path d="M1101.4 82.900C1105.500 82.900 1108.400 85.500 1108.400 89V99.500H1101.400z" fill="#ececec" stroke="#cbcbcb"/><path d="M1119.600 82.900C1115.500 82.900 1112.600 85.500 1112.600 89V99.500H1119.600z" fill="#ececec" stroke="#cbcbcb"/><path d="M1110.500 81.500V100.500" stroke="#cbcbcb" stroke-width="1.200"/>
<circle cx="1107.400" cy="127.300" r="6.900" fill="#ededed" stroke="#b9b9b9" stroke-width="1.400"/><rect x="1106.900" y="115.800" width="12.200" height="12.200" fill="#dcd3f5" stroke="#7a3db0" stroke-width="1.500"/><path d="M1106.900 121.300V128H1114" fill="none" stroke="#c9c9c9" stroke-width="1"/><path d="M1106.500 120.500A7.500 7.500 0 0 1 1114.400 128.200" fill="none" stroke="#8b4ad0" stroke-width="1.700"/>
<rect x="1106.900" y="150" width="12.200" height="12.200" fill="#ececec" stroke="#c2c2c2" stroke-width="1.300"/><circle cx="1107.400" cy="161.300" r="6.900" fill="#ececec" fill-opacity=".8" stroke="#bdbdbd" stroke-width="1.400"/><path d="M1106.900 155.500V162.200H1114" fill="none" stroke="#d9d9d9" stroke-width="1"/>
<rect x="1198.500" y="82.500" width="7" height="17" fill="#e3e3e3" stroke="#d5d5d5"/><rect x="1205.500" y="82.500" width="12" height="17" fill="#f1f1f1" stroke="#c9c9c9"/><path d="M1208 91H1214.500M1212 88L1215 91 1212 94" fill="none" stroke="#b0b0b0" stroke-width="1.600"/>
<linearGradient id="gpv" x1="0" y1="0" x2="0" y2="1"><stop offset="0" stop-color="#a88bd0"/><stop offset="1" stop-color="#ffffff"/></linearGradient><linearGradient id="gph" x1="1" y1="0" x2="0" y2="0"><stop offset="0" stop-color="#a88bd0"/><stop offset="1" stop-color="#ffffff"/></linearGradient><rect x="1198" y="115.500" width="19.500" height="19" fill="#ffffff"/><rect x="1198" y="115.500" width="17" height="4.500" fill="url(#gpv)"/><path d="M1212.500 118H1217.500V134.500H1212.500z" fill="url(#gph)"/><path d="M1198 115.600H1214.500Q1217.400 115.600 1217.400 118.500V134.500" fill="none" stroke="#7a3db0" stroke-width="1.200"/><path d="M1198 124.600H1208.400V134.500" fill="none" stroke="#444" stroke-width="1.100" stroke-dasharray="2 1.500"/><path d="M1209 123.800L1213.800 119.200M1210.300 118.800H1214.200V122.600" fill="none" stroke="#2a2a2a" stroke-width="1.300"/>
<rect x="1204.500" y="149.800" width="13" height="12.700" fill="#fbfbfb" stroke="#c9c9c9" stroke-width="1.200"/><circle cx="1205.500" cy="161.200" r="6.900" fill="#fbfbfb" fill-opacity=".7" stroke="#c4c4c4" stroke-width="1.400"/><path d="M1204.800 154.300A7.300 7.300 0 0 1 1212.700 162.200" fill="none" stroke="#6a35a0" stroke-width="2"/>
<path d="M1309.900 99.800L1313.400 93.800H1329.200L1326.300 99.800z" fill="#f0f0f0" stroke="#a9a9a9" stroke-width="1.100"/><path d="M1312.900 87.400C1314.500 87.400 1315.500 89.600 1317.300 89.400C1319.500 89.200 1321 84.600 1323.300 84.400C1325 84.300 1326 85.500 1327.300 86.400" fill="none" stroke="#a5a5a5" stroke-width="1.600"/><path d="M1310.400 96C1311.500 94.500 1312.500 94.300 1313.500 95.300C1314.500 96.300 1315 97.400 1316.200 97.200C1318.200 96.800 1319.300 93 1321.300 92.900C1322.800 92.800 1323.600 94.400 1324.800 95.300" fill="none" stroke="#8b4ad0" stroke-width="1.800"/>
<path d="M1311.600 116.600H1328.400V121.600H1316.900V128.500H1328.400V133.200H1311.600z" fill="#f0f0f0" stroke="#bdbdbd" stroke-width="1.400"/><path d="M1314 119.200H1328M1314 119.200V130.800H1328" fill="none" stroke="#dedede" stroke-width="1"/>
<path d="M1313.600 158V166.600H1327.200V153.500" fill="#ffffff" stroke="#b594dc" stroke-width="1.500"/><path d="M1315.500 153.200C1318.500 153.200 1320 158.500 1323 158.500C1325 158.500 1326.500 155.500 1327.200 153.500V159.500H1314.300V156z" fill="#dccff2"/><path d="M1310.600 160.300C1311.500 155 1313.500 152.800 1315.500 152.800C1318.500 152.800 1320 158.300 1323 158.300C1326 158.300 1327.500 153 1329.200 149.800" fill="none" stroke="#6a35a0" stroke-width="2.200" stroke-linecap="round"/>
<path d="M1433.800 82H1452.200V99.800H1433.800z" fill="#ededed" stroke="#c9c9c9" stroke-width="1.200"/><path d="M1442.800 81.900H1452.300V91.400z" fill="#d9cdf0" stroke="#7a3db0" stroke-width="1.300" stroke-linejoin="round"/>
<path d="M1433.300 118.600L1441.300 115.700V130L1433.300 133z" fill="#c8ecf9" stroke="#a9a9a9" stroke-width="1.200"/><clipPath id="cpd"><path d="M1443.200 115.200L1452.700 119.600V134.500L1443.200 130.500z"/></clipPath><path d="M1443.200 115.200L1452.700 119.600V134.500L1443.200 130.500z" fill="#7cc8ea"/><g clip-path="url(#cpd)" stroke="#1f6f95" stroke-width=".8"><path d="M1443 92.8L1453 102.8M1453 92.8L1443 102.8"/><path d="M1443 96.0L1453 106.0M1453 96.0L1443 106.0"/><path d="M1443 99.2L1453 109.2M1453 99.2L1443 109.2"/><path d="M1443 102.4L1453 112.4M1453 102.4L1443 112.4"/><path d="M1443 105.6L1453 115.6M1453 105.6L1443 115.6"/><path d="M1443 108.8L1453 118.8M1453 108.8L1443 118.8"/><path d="M1443 112.0L1453 122.0M1453 112.0L1443 122.0"/><path d="M1443 115.2L1453 125.2M1453 115.2L1443 125.2"/><path d="M1443 118.4L1453 128.4M1453 118.4L1443 128.4"/><path d="M1443 121.6L1453 131.6M1453 121.6L1443 131.6"/><path d="M1443 124.8L1453 134.8M1453 124.8L1443 134.8"/><path d="M1443 128.0L1453 138.0M1453 128.0L1443 138.0"/><path d="M1443 131.2L1453 141.2M1453 131.2L1443 141.2"/><path d="M1443 134.4L1453 144.4M1453 134.4L1443 144.4"/><path d="M1443 137.6L1453 147.6M1453 137.6L1443 147.6"/><path d="M1443 140.8L1453 150.8M1453 140.8L1443 150.8"/></g><path d="M1443.200 115.200L1452.700 119.600V134.500L1443.200 130.500z" fill="none" stroke="#1f7ba8" stroke-width="1.400"/>
<path d="M1433.400 154C1435 150 1438 149.500 1441 149.700C1444 149.900 1446.500 150.500 1447.700 152.200L1447.700 155.800C1449.500 155.500 1451.500 156.500 1452.600 158.500L1452.600 168.200C1449.500 165.800 1443 165.500 1438.400 167.700L1438.400 160.500C1436.500 159.800 1434.800 160 1433.400 161Z" fill="url(#gb2)" stroke="#1f7ba8" stroke-width="1.600" stroke-linejoin="round"/>
<path d="M1612.6 111.7C1612.8 104 1614.5 98 1617 93.5C1620 88 1624.5 84 1629.4 82.6C1634 81.6 1639 82 1642.5 83C1646.5 84.5 1650 87.5 1652 90.6C1646.5 98 1643 108 1641 119C1637 114.5 1632 111.5 1626.5 110.3C1621.5 109.5 1616.5 110.2 1612.6 111.7z" fill="url(#gb2)" stroke="#b4b4b4" stroke-width="1.3"/><path d="M1617 93.5C1622.5 91.5 1628 91.8 1633.8 93.5C1638.5 95 1643 97.8 1646.2 100.8" fill="none" stroke="#b4b4b4" stroke-width="1.3"/><path d="M1641.8 83.3C1633 89 1628 99 1626.2 110.3M1652 90.6C1646.5 98 1643 108 1641 119" fill="none" stroke="#3798c2" stroke-width="1.6"/>
<clipPath id="cpf"><rect x="1680.3" y="83.6" width="14.2" height="13.9"/></clipPath><g><rect x="1679.5" y="82.8" width="15.8" height="15.5" fill="#b5e5f8" stroke="#3a9dca" stroke-width="1.3"/><g clip-path="url(#cpf)"><path d="M1668 98L1683 83" stroke="#e6f7fd" stroke-width="1"/><path d="M1671 98L1686 83" stroke="#e6f7fd" stroke-width="1"/><path d="M1674 98L1689 83" stroke="#e6f7fd" stroke-width="1"/><path d="M1677 98L1692 83" stroke="#e6f7fd" stroke-width="1"/><path d="M1680 98L1695 83" stroke="#e6f7fd" stroke-width="1"/><path d="M1683 98L1698 83" stroke="#e6f7fd" stroke-width="1"/><path d="M1686 98L1701 83" stroke="#e6f7fd" stroke-width="1"/><path d="M1689 98L1704 83" stroke="#e6f7fd" stroke-width="1"/><path d="M1692 98L1707 83" stroke="#e6f7fd" stroke-width="1"/><path d="M1695 98L1710 83" stroke="#e6f7fd" stroke-width="1"/></g></g>
<path d="M1677.5 132.5V120.5C1683 114.5 1691 114.5 1696.5 120.5V133.5C1691 127 1683 127 1677.5 132.5z" fill="url(#gb2)" stroke="#a5a5a5" stroke-width="1.3"/>
<path d="M1677.5 153.5L1682 149.5H1696.5V164L1692 168H1677.5z" fill="#f4f4f4" stroke="#9b9b9b" stroke-width=".9"/><path d="M1677.5 153.5H1692V168M1692 153.5L1696.5 149.5" fill="none" stroke="#9b9b9b" stroke-width=".9"/><circle cx="1688" cy="158.3" r="6.2" fill="url(#gs)" stroke="#4fa9d2" stroke-width=".9"/>
<rect x="1676.5" y="152.5" width="2" height="2" fill="#444"/>
<rect x="1691" y="167" width="2" height="2" fill="#444"/>
<rect x="1695.5" y="148.5" width="2" height="2" fill="#444"/>
<rect x="1676.5" y="167" width="2" height="2" fill="#444"/>
<rect x="1695.5" y="163" width="2" height="2" fill="#444"/>
<rect x="1765.3" y="82.5" width="38.2" height="36.8" fill="#fdebca" stroke="#e3bd80" stroke-width="1.2"/><path d="M1775 82.6H1803.4V110.6H1797.5C1796 110.6 1796.5 108.5 1797.5 107.8C1799.5 106.3 1800.5 104.5 1799.5 102.5C1798.5 100.5 1794 100 1791 100.5C1788 101 1786 103 1787 105.2C1787.6 106.5 1789.3 107.3 1790 108.3C1790.6 109.3 1790.2 110.6 1788.8 110.6H1775V98.8C1775 97.6 1776.3 97.4 1777.2 98.2C1778.8 99.7 1781 100.4 1782.8 99C1784.5 97.5 1785 94 1784.3 91C1783.6 88.3 1781.5 87 1779.3 88C1778 88.6 1777.3 89.8 1776.3 90.2C1775.5 90.5 1775 90 1775 89z" fill="#c9ecfa" stroke="#3ba2d2" stroke-width="1.3"/>
<rect x="19.5" y="216.8" width="3.9" height="3.9" fill="#ffffff" stroke="#3a3a3a" stroke-width="1.3"/><rect x="19.5" y="224.3" width="3.9" height="3.9" fill="#ffffff" stroke="#3a3a3a" stroke-width="1.3"/><rect x="19.5" y="231.8" width="3.9" height="3.9" fill="#ffffff" stroke="#3a3a3a" stroke-width="1.3"/><rect x="28.6" y="224.3" width="3.9" height="3.9" fill="#ffffff" stroke="#3a3a3a" stroke-width="1.3"/><path d="M21.45 220.7v3.6M21.45 228.2v3.6M23.4 226.25h5.2" stroke="#3a3a3a" stroke-width="1.3"/>
<rect x="52.5" y="216.5" width="11.5" height="7.5" rx="1.5" fill="url(#gt)" stroke="#c9993f" stroke-width="1"/><path d="M53.5 218.3h9.5" stroke="#fff6df" stroke-width="1.2"/>
<rect x="56.5" y="222.5" width="11.5" height="7.5" rx="1.5" fill="url(#gt)" stroke="#c9993f" stroke-width="1"/><path d="M57.5 224.3h9.5" stroke="#fff6df" stroke-width="1.2"/>
<rect x="60.5" y="228.5" width="11.5" height="7.5" rx="1.5" fill="url(#gt)" stroke="#c9993f" stroke-width="1"/><path d="M61.5 230.3h9.5" stroke="#fff6df" stroke-width="1.2"/>
<path d="M22.55 258.10h10.5l-5.25 7z" fill="#c3c3c3"/>
<path d="M40.5 259.5L43.5 256H57V268.5L54 272H40.5z" fill="#8e8e8e"/><path d="M40.5 259.5L43.5 256H57L54 259.5z" fill="#c9c9c9"/><rect x="40.5" y="259.5" width="11.5" height="12.5" fill="#43a832"/><path d="M52 259.5h2V272h-2z" fill="#e6e6e6"/>
<circle cx="67" cy="254.5" r="1.1" fill="#cfcfcf"/>
<circle cx="67" cy="259.3" r="1.1" fill="#cfcfcf"/>
<circle cx="67" cy="264.3" r="1.1" fill="#cfcfcf"/>
<circle cx="67" cy="269.3" r="1.1" fill="#cfcfcf"/>
<rect x="95.5" y="252.5" width="11.5" height="4" fill="#8fd3ee" stroke="#2a86b2" stroke-width="1.1"/>
<path d="M87.90 253.30h4.2l-2.10 2.8z" fill="#333"/>
<rect x="95.5" y="260" width="11.5" height="4" fill="#8fd3ee" stroke="#2a86b2" stroke-width="1.1"/>
<path d="M87.90 260.80h4.2l-2.10 2.8z" fill="#333"/>
<rect x="95.5" y="267.5" width="11.5" height="4" fill="#8fd3ee" stroke="#2a86b2" stroke-width="1.1"/>
<path d="M87.90 268.30h4.2l-2.10 2.8z" fill="#333"/>
<rect x="126.3" y="252.8" width="4" height="4" fill="#555" stroke="#333" stroke-width=".8"/><path d="M120.3 252.5l2.8 2.3-2.8 2.3z" fill="#333"/>
<rect x="126.3" y="260.3" width="4" height="4" fill="#555" stroke="#333" stroke-width=".8"/><path d="M120.3 260.0l2.8 2.3-2.8 2.3z" fill="#333"/>
<rect x="126.3" y="267.8" width="4" height="4" fill="#555" stroke="#333" stroke-width=".8"/><path d="M120.3 267.5l2.8 2.3-2.8 2.3z" fill="#333"/>
<path d="M148.5 253.5h15v15h-15zM148.5 257h15M153.5 253.5v15M158.5 253.5v15" fill="#e9e9e9" stroke="#a5a5a5" stroke-width="1.6"/><ellipse cx="161.5" cy="269" rx="5" ry="2.8" fill="#a5a5a5" stroke="#dcdcdc" stroke-width=".8"/><circle cx="161.5" cy="269" r="1.3" fill="#e6e6e6"/>
<path d="M191.5 255.5h7l2 2.5h4.5v13l-5 1.5-8.5-3z" fill="url(#gt)" stroke="#c9993f"/><path d="M199.5 257.5l5.5-2.5v12.5c0 2-1.5 4-5.5 4.5z" fill="#f5d9a3" stroke="#c9993f"/><path d="M192 251.5v8M188 255.5h8M189.2 252.7l5.6 5.6M194.8 252.7l-5.6 5.6" stroke="#f39c12" stroke-width="1.3"/><circle cx="192" cy="255.5" r="1.4" fill="#ffe9a8"/>
<rect x="230.5" y="252.8" width="3.8" height="3.8" fill="#fff" stroke="#333" stroke-width="1.2"/>
<rect x="230.5" y="260.3" width="3.8" height="3.8" fill="#5bb8e2" stroke="#333" stroke-width="1.2"/>
<rect x="230.5" y="267.8" width="3.8" height="3.8" fill="#fff" stroke="#333" stroke-width="1.2"/>
<path d="M232.4 256.6v3.7M232.4 264.1v3.7" stroke="#333" stroke-width="1.2"/><path d="M237.5 262.5h11.5l-4.3 4.6v4.9h-2.9v-4.9z" fill="#3a3a3a"/>
<rect x="260.3" y="253.3" width="4.2" height="16.5" fill="#8fd3ee" stroke="#2a86b2" stroke-width="1.2"/><path d="M264.5 253.3h10.5v5.5h-10.5zM264.5 258.8h10.5M269.7 253.3v5.5" fill="#f2f2f2" stroke="#555" stroke-width="1.1"/><path d="M268.5 261.5h7l3.5 3v7.5h-10.5z" fill="#e9e9e9" stroke="#8a8a8a"/><path d="M271 266.5h5.5M271 269h5.5" stroke="#8a8a8a" stroke-width="1.1"/>
<path d="M291 258.8l3.8 3.3-3.8 3.3M296.5 258.8l3.8 3.3-3.8 3.3" fill="none" stroke="#333" stroke-width="1.5"/>
<path d="M314.5 252.5h11l5 5v13.5h-16z" fill="url(#gw)" stroke="#c4c9cc"/><path d="M325.5 252.5v5h5" fill="#dbe6ec" stroke="#c4c9cc"/><circle cx="318.5" cy="261" r="1.3" fill="none" stroke="#b4b9bc"/><circle cx="318.5" cy="266" r="1.3" fill="none" stroke="#b4b9bc"/><path d="M321.5 261h6M321.5 266h6" stroke="#b4b9bc" stroke-width="1.2"/><path d="M334.5 271.5v3h-3z" fill="#555"/>
<path d="M19.5 290.8h19l-7.3 8.2v8.5h-4.4v-8.5z" fill="#fdfdfd" stroke="#707070" stroke-width="1.5" stroke-linejoin="round"/>
<path d="M269.5 294.3l9.3 8.6M278.8 294.3l-9.3 8.6" stroke="#a8a8a8" stroke-width="1.5"/>
<path d="M292.80 295.80h8.4l-4.20 5.2z" fill="#555"/>
<path d="M322.3 291.5v13.4M315.5 298.2h13.6" stroke="#808080" stroke-width="2.8"/>
<path d="M19.5 329.0L23.0 325.5H35.5V338.0L32.0 341.5H19.5z" fill="#4da3cb"/><path d="M19.5 329.0L23.0 325.5H35.5L32.0 329.0z" fill="#dff6fd"/><rect x="19.5" y="329.0" width="12.5" height="12.5" fill="url(#gb)"/><path d="M19.5 329.0L23.0 325.5H35.5V338.0L32.0 341.5H19.5zM19.5 329.0H32.0V341.5M32.0 329.0L35.5 325.5" fill="none" stroke="#4fa9d2" stroke-width="1"/>
<path d="M49.2 324.700l4.200 7.500h-8.400z" fill="#f5b81a" stroke="#e0a000" stroke-width=".6" stroke-linejoin="round"/>
<path d="M25.5 351.1l4.8 4.5-4.8 4.5z" fill="#6b6b6b"/>
<path d="M25.5 460.8l4.8 4.5-4.8 4.5z" fill="#6b6b6b"/>
<path d="M25.5 482.8l4.8 4.5-4.8 4.5z" fill="#6b6b6b"/>
<rect x="44" y="346.3" width="17.5" height="18" fill="#f7f7f7" stroke="#b0b0b0"/><rect x="44.5" y="346.8" width="16.5" height="2" fill="#dcdcdc"/><rect x="46.3" y="349.1" width="3" height="3" fill="#dff4fc" stroke="#2a86b2" stroke-width="1.1"/><path d="M51.8 349.9h6M51.8 351.5h4.5" stroke="#b5b5b5" stroke-width=".8"/><rect x="46.3" y="354.1" width="3" height="3" fill="#dff4fc" stroke="#2a86b2" stroke-width="1.1"/><path d="M51.8 354.9h6M51.8 356.5h4.5" stroke="#b5b5b5" stroke-width=".8"/><rect x="46.3" y="359.1" width="3" height="3" fill="#dff4fc" stroke="#2a86b2" stroke-width="1.1"/><path d="M51.8 359.9h6M51.8 361.5h4.5" stroke="#b5b5b5" stroke-width=".8"/>
<path d="M47.8 371.7h13.2l-4.3 9.2h-13.2z" fill="none" stroke="#8d6d31" stroke-width="1.5"/>
<path d="M47.8 393.59999999999997h13.2l-4.3 9.2h-13.2z" fill="none" stroke="#8d6d31" stroke-width="1.5"/>
<path d="M47.8 415.5h13.2l-4.3 9.2h-13.2z" fill="none" stroke="#8d6d31" stroke-width="1.5"/>
<path d="M50.3 435.5v10.3h10.5M50.3 445.8l-5.5 5.5" fill="none" stroke="#8d6d31" stroke-width="1.4"/><path d="M48.5 436.3l1.8-2.8 1.8 2.8zM59.8 444l2.8 1.8-2.8 1.8zM43.5 449.7l-.2 3.2 3.3-.3z" fill="#8d6d31"/>
<path d="M45 461.5C47 458 58 458 60.5 461.5" fill="none" stroke="#8cc9e4" stroke-width="1.6"/><circle cx="46.8" cy="465.8" r="3" fill="#fff" stroke="#a3a3a3" stroke-width="1.3"/><circle cx="58.3" cy="465.8" r="3.1" fill="#bfe8f8" stroke="#2f8fb8" stroke-width="1.6"/><path d="M52.3 455.5v19" stroke="#555" stroke-width="1" stroke-dasharray="3 1.5 1 1.5"/>
<path d="M43.8 485L51 477.6v7.4z" fill="#c6edfb"/><path d="M51 477.6h11.3L55 485h-4z" fill="#93d0ea"/><path d="M55 485l7.3-7.4v10.9l-7.3.2z" fill="#71b3d2"/><path d="M55 488.7h7l-7 7.5z" fill="url(#gb)"/><path d="M43.8 485L51 477.6h11.3v10.9L55 496.2" fill="none" stroke="#7fc0dd" stroke-width=".9"/><rect x="43.8" y="485" width="11.2" height="11.2" fill="#f4f4f4" stroke="#b5b5b5"/>
<linearGradient id="gst" x1="0" y1="0" x2="0" y2="1"><stop offset="0" stop-color="#ffffff"/><stop offset="1" stop-color="#c9dbe6"/></linearGradient><rect x="15.9" y="985.9" width="18.4" height="3" fill="#ffffff" stroke="#9a9a9a" stroke-width="1"/><rect x="23.4" y="990.4" width="10.9" height="14" fill="#f0f0f0" stroke="#a5a5a5" stroke-width="1"/><rect x="15.9" y="990.6" width="6" height="13.4" fill="url(#gst)" stroke="#1f6f95" stroke-width="1.5"/><path d="M24 1001.800c2.200-4 8.800-4 11 0-2.200 4-8.800 4-11 0z" fill="#3a3a3a" stroke="#dedfe0" stroke-width=".6"/><circle cx="29.500" cy="1001.800" r="1.700" fill="#e6e6e6"/><circle cx="29.500" cy="1001.800" r=".8" fill="#3a3a3a"/>
<radialGradient id="ggl" cx="0.4" cy="0.35" r="0.7"><stop offset="0" stop-color="#6cc4f5"/><stop offset="1" stop-color="#1f86d0"/></radialGradient><ellipse cx="55" cy="994.700" rx="12.300" ry="4.600" transform="rotate(-40 55 994.700)" fill="none" stroke="#3c3c3c" stroke-width="1.400"/><circle cx="55.300" cy="995" r="8.400" fill="url(#ggl)"/><path d="M49.500 990.500c2.500-1 4 .5 3.500 2.500s-3 2-3.500 4.500M57 989c1.500 1.500 4 1 4.500 3s-1.500 3-3.500 3.500-2 3-1 5" fill="none" stroke="#a6defb" stroke-width="1.600" opacity=".75"/><path d="M46.500 1001.800C44.500 998 49 991.500 55.500 988" fill="none" stroke="#3c3c3c" stroke-width="1.300"/>
<rect x="75.900" y="985.900" width="18.300" height="18" rx="1" fill="url(#gst)" stroke="#1f6f95" stroke-width="1.500"/>
<path d="M121 969.300l9.300 17.600h-18.600z" fill="#f8c41c" stroke="#e2a406" stroke-width="1.100" stroke-linejoin="round"/><rect x="119.900" y="974.600" width="2.200" height="7.300" fill="#1f2a44"/><rect x="119.900" y="983.200" width="2.200" height="2" fill="#1f2a44"/>
<path d="M359.800 939.700v7l-6.500-3.500zM366.300 939.700v7l-6.500-3.500z" fill="#4a4a4a"/><path d="M385.800 938v10.700l-9.500-5.350z" fill="#b9b9b9"/><path d="M395.900 938v10.700l9.500-5.350z" fill="#b9b9b9"/><path d="M415.900 939.700v7l6.500-3.500zM422.200 939.700v7l6.500-3.500z" fill="#4a4a4a"/><path d="M451 939.500v8.200M446.800 943.600h8.400" stroke="#3c3c3c" stroke-width="1.700"/>
<rect x="1412.100" y="984.100" width="2.800" height="19.700" fill="#b9b9b9"/><rect x="1412.100" y="984.100" width="2.800" height="10" fill="#f0ae12"/><path d="M1414.900 984.100L1427.400 987.800L1414.900 993.900z" fill="#f5b81a"/>
<linearGradient id="gbin" x1="0" y1="0" x2="1" y2="0"><stop offset="0" stop-color="#2a2a2a"/><stop offset="0.45" stop-color="#8a8a8a"/><stop offset="1" stop-color="#2a2a2a"/></linearGradient><path d="M1514 986.300h4.200v3h-4.200zM1523.800 986.300h4.200v3h-4.200z" fill="#3a3a3a"/><path d="M1513.500 989.300h5.500l1.500 6v9.400h-9.300v-5.700z" fill="url(#gbin)"/><path d="M1523 989.300h5.500l2.400 9.700v5.700h-9.300v-9.400z" fill="url(#gbin)"/><rect x="1519.500" y="993" width="3" height="4.500" fill="#3a3a3a"/>
<path d="M1542.00 992.20h8l-4.00 4.8z" fill="#5a5a5a"/>
<path d="M1880.00 992.30h8.4l-4.20 5z" fill="#666"/>
<path d="M1902 1009l12-12M1906 1009l8-8M1910 1009l4-4" stroke="#c6c9c9" stroke-width="1.3"/>
<rect x="881.6" y="227" width="17.6" height="17" fill="#f6f6f6" stroke="#c4c4c4" stroke-width="1.4"/>
<path d="M894.1 239.1L900.9 245.5" stroke="#9a9a9a" stroke-width="3.2" stroke-linecap="round"/><path d="M894.1 239.1L900.9 245.5" stroke="#e9e9e9" stroke-width="1.2" stroke-linecap="round"/><circle cx="890.3" cy="235.3" r="5.4" fill="#e4f6fd" stroke="#2f8fb8" stroke-width="1.4"/>
<path d="M925.2 238.2L932.4 245.0" stroke="#9a9a9a" stroke-width="3.2" stroke-linecap="round"/><path d="M925.2 238.2L932.4 245.0" stroke="#e9e9e9" stroke-width="1.2" stroke-linecap="round"/><circle cx="920.4" cy="233.4" r="6.8" fill="#e4f6fd" stroke="#2f8fb8" stroke-width="1.4"/><path d="M916.8 233.4h7.2M920.4 229.8v7.2" stroke="#1f6f95" stroke-width="2.2"/>
<path d="M957.2 238.2L964.4 245.0" stroke="#9a9a9a" stroke-width="3.2" stroke-linecap="round"/><path d="M957.2 238.2L964.4 245.0" stroke="#e9e9e9" stroke-width="1.2" stroke-linecap="round"/><circle cx="952.4" cy="233.4" r="6.8" fill="#e4f6fd" stroke="#2f8fb8" stroke-width="1.4"/><path d="M948.8 233.4h7.2" stroke="#1f6f95" stroke-width="2.2"/>
<rect x="977.8" y="227.4" width="18.4" height="17.5" fill="#7cc3e0" stroke="#b5b5b5" stroke-width="1.2"/><rect x="978.4" y="228" width="17.2" height="2.2" fill="#d9d9d9"/><path d="M978.4 230.2H993C986 231.500 980.500 236.500 978.400 243z" fill="#ffffff"/><path d="M993 230.200H995.600V232.500C988 233.500 982 238 978.400 244.300V243C980.500 236.500 986 231.500 993 230.200z" fill="#c5e8f6"/><path d="M981.5 243.8L992.5 234.2" stroke="#1f6f95" stroke-width="2"/>
<path d="M1016 231l3.5-4.5h9v9.5l-3.5 4.5h-9z" fill="#d6d6d6"/><path d="M1019.5 226.5h9v9.5l-3.5 4.5v-9.5z" fill="#bdbdbd"/><path d="M1016 231l3.5-4.5h9l-3.5 4.5z" fill="#ececec"/><circle cx="1015.5" cy="239" r="6.3" fill="url(#gsg)"/>
<path d="M1031.5 245.3v3.2h-3.2z" fill="#555"/>
<path d="M1041.6 231.5L1046 226.8H1060.2V240.8L1055.8 245.3H1041.6z" fill="#4fa3c9" stroke="#1f6f95" stroke-width="1.4" stroke-linejoin="round"/><path d="M1041.6 231.5L1046 226.8H1060.2L1055.8 231.5z" fill="#9fd6ee" stroke="#1f6f95" stroke-width="1"/><rect x="1041.6" y="231.5" width="14.2" height="13.8" fill="#ffffff" stroke="#1f6f95" stroke-width="1.4"/>
<path d="M1063.3 245.3v3.2h-3.2z" fill="#555"/>
<path d="M1073.6 235L1078 226.8H1088.5L1092.5 235 1088.5 244.5H1078z" fill="#cfeffb" stroke="#6fc0e2" stroke-width="1.1"/><path d="M1078 226.8H1088.5L1084 235H1073.6z" fill="#e6f8fe" stroke="#6fc0e2" stroke-width=".8"/><path d="M1084 235L1088.5 226.8 1092.5 235V238H1084z" fill="#5fabd0"/><rect x="1086.3" y="237.8" width="5.6" height="7.6" fill="#f4f4f4" stroke="#9a9a9a" stroke-width=".9"/><path d="M1088 240.3h2.2M1088 242.8h2.2" stroke="#8a8a8a"/>
<path d="M1095.6 245.3v3.2h-3.2z" fill="#555"/>
<path d="M1106 227h16.2v16.8h-16.2zM1106 230.5h16.2M1106 234.5h16.2M1106 238.5h16.2M1110 230.5v13.3" fill="#f8f8f8" stroke="#b9b9b9" stroke-width="1.1"/><rect x="1106" y="227" width="16.2" height="3" fill="#dcdcdc"/><path d="M1111.8 239h3l1-1.8h4.5l1 1.8h3.2v6.8h-12.7z" fill="#4a4a4a"/><circle cx="1118" cy="242.3" r="2.3" fill="#7a7a7a" stroke="#dcdcdc" stroke-width=".8"/>
<path d="M1137.5 231L1142 227H1156.5V240L1151.5 245 1140 241.5z" fill="#bfe4f3" stroke="#8acbe6" stroke-width="1.2" stroke-linejoin="round"/><path d="M1142 231.5h9.5v7.5l-7.5-1z" fill="#eaf7fc"/><path d="M1137.5 231l4.5.5M1156.5 227l-5 4.5M1151.5 245v-6M1140 241.5l4-3.5" stroke="#6db7d6" stroke-width="1"/><path d="M1140 241.5l4-3.5 7.5 1v6z" fill="#8dc9e2"/>
<path d="M1170.5 244.8L1174.5 229H1188.5" fill="none" stroke="#b5dff0" stroke-width="1"/><path d="M1174.5 229H1188L1170.5 244.8z" fill="url(#gb2)"/><path d="M1188.3 228.5V241L1184.5 244.8H1172" fill="none" stroke="#aaa" stroke-width="1.2" stroke-dasharray="1.2 1.2"/><path d="M1169.8 245.5L1188.8 226.7" stroke="#1f6f95" stroke-width="1.8"/>
<path d="M1191.6 245.3v3.2h-3.2z" fill="#555"/>
<path d="M1201.6 227l4.6 4.6M1206.2 227l-4.6 4.6" stroke="#8d6d31" stroke-width="1.7"/><path d="M1213.5 226.5L1204.5 245.5" stroke="#8d6d31" stroke-width="2" stroke-dasharray="4.6 3"/><path d="M1214.2 235.5V241.5H1219M1214.2 241.5L1210.5 244.5" fill="none" stroke="#8d6d31" stroke-width="1.4"/><path d="M1212.2 236.3l2-2.8 2 2.8zM1218.3 239.5l2.6 2-2.6 2zM1209.5 242.6l-.4 3 3-.6z" fill="#8d6d31"/>
<path d="M1223.6999999999998 245.3v3.2h-3.2z" fill="#555"/>
<rect x="1233.5" y="226.9" width="11.5" height="7.2" fill="#fdf6dc" stroke="#9a9a9a" stroke-width="1"/><path d="M1246 230.5h7v2h-2.3v4.5h-2.4v-4.5H1246z" fill="#3a3a3a"/><path d="M1247.5 235.5l3 3.5 3-3.5" fill="none" stroke="#3a3a3a" stroke-width="1.6"/><path d="M1241.8 243.2c2-3.5 9-3.5 11.5 0-2.5 3.5-9.500 3.500-11.500 0z" fill="#3a3a3a"/><circle cx="1247.500" cy="243.200" r="1.7" fill="#dcdcdc"/><circle cx="1247.500" cy="243.200" r=".8" fill="#3a3a3a"/>
<path d="M1269.5 230.3L1275.6 236.6H1281.7M1275.6 236.6L1269.1 242.9" fill="none" stroke="#3a3a3a" stroke-width="1.3"/><circle cx="1269.5" cy="230.3" r="3.2" fill="#6cb868" stroke="#4d9a4a" stroke-width=".7"/><circle cx="1281.7" cy="236.6" r="3.2" fill="#e87a7a" stroke="#c85a5a" stroke-width=".7"/><circle cx="1269.1" cy="242.9" r="3.2" fill="#4a9bc9" stroke="#2f7fad" stroke-width=".7"/>
<path d="M1307 228l9 15.5h-18z" fill="none" stroke="#b9b9b9" stroke-width="3.6" stroke-linejoin="round"/><path d="M1307 233.5l4.500 7.500h-9z" fill="#f4f5f9"/><circle cx="1313.500" cy="242" r="3.600" fill="#dcdcdc" stroke="#b9b9b9" stroke-width=".8"/><path d="M1312.300 240l3.200 2-3.200 2z" fill="#f8f8f8"/>
<rect x="1331.500" y="228.600" width="5.400" height="13.600" fill="#b4b4b4"/><rect x="1339.700" y="228.600" width="5.400" height="13.600" fill="#b4b4b4"/>
<path d="M1361 228.600h19.500v13.600h-17.500c3.500-1.500 5-4 5-6.800s-2.500-5.300-7-6.800z" fill="#d6d6d6"/><path d="M1361 228.600h19.500v3h-14z" fill="#c4c4c4"/>
<defs><linearGradient id="mG" x1="0" y1="0" x2="0" y2="1"><stop offset="0" stop-color="#8893a2"/><stop offset="0.07" stop-color="#95a1b1"/><stop offset="0.22" stop-color="#9ba7b7"/><stop offset="0.30" stop-color="#99a5b5"/><stop offset="0.46" stop-color="#8e99a8"/><stop offset="0.6" stop-color="#7a8390"/><stop offset="0.73" stop-color="#626874"/><stop offset="0.83" stop-color="#4d525d"/><stop offset="0.92" stop-color="#3b3f49"/><stop offset="1" stop-color="#383c46"/></linearGradient><linearGradient id="mCone" gradientUnits="userSpaceOnUse" x1="306.3" y1="-64.8" x2="319.7" y2="60.8"><stop offset="0" stop-color="#393d46"/><stop offset="0.3" stop-color="#5a5f6b"/><stop offset="0.65" stop-color="#8a94a3"/><stop offset="1" stop-color="#9aa6b6"/></linearGradient><linearGradient id="mHole" gradientUnits="userSpaceOnUse" x1="283.2" y1="-39.6" x2="286.5" y2="41.8"><stop offset="0" stop-color="#454952"/><stop offset="0.35" stop-color="#747c89"/><stop offset="0.7" stop-color="#98a3b3"/><stop offset="1" stop-color="#a0acbc"/></linearGradient><linearGradient id="mBack" gradientUnits="userSpaceOnUse" x1="274.2" y1="-48.5" x2="282.2" y2="59.7"><stop offset="0" stop-color="#5b606b"/><stop offset="0.5" stop-color="#4a4f59"/><stop offset="1" stop-color="#3e424b"/></linearGradient></defs>
<g transform="translate(1125.7,590.7) rotate(27.0)"><path d="M-12.65 -42.57L2.50 -43.30L2.50 43.30L-12.65 42.27z" fill="url(#mG)"/><path d="M-25.29 -41.88L-10.15 -42.71L-10.15 42.47L-25.29 41.24z" fill="url(#mG)"/><path d="M-37.94 -41.28L-22.79 -42.00L-22.79 41.44L-37.94 40.21z" fill="url(#mG)"/><path d="M-50.58 -40.67L-35.44 -41.40L-35.44 40.41L-50.58 39.17z" fill="url(#mG)"/><path d="M-63.23 -40.06L-48.08 -40.79L-48.08 39.38L-63.23 38.22z" fill="url(#mG)"/><path d="M-75.88 -39.41L-60.73 -40.18L-60.73 38.40L-75.88 37.34z" fill="url(#mG)"/><path d="M-88.52 -38.70L-73.38 -39.55L-73.38 37.51L-88.52 36.46z" fill="url(#mG)"/><path d="M-101.17 -37.99L-86.02 -38.84L-86.02 36.63L-101.17 35.57z" fill="url(#mG)"/><path d="M-113.81 -37.28L-98.67 -38.13L-98.67 35.75L-113.81 34.64z" fill="url(#mG)"/><path d="M-126.46 -36.40L-111.31 -37.42L-111.31 34.85L-126.46 33.62z" fill="url(#mG)"/><path d="M-139.10 -35.34L-123.96 -36.61L-123.96 33.83L-139.10 32.60z" fill="url(#mG)"/><path d="M-151.75 -34.29L-136.60 -35.55L-136.60 32.81L-151.75 31.58z" fill="url(#mG)"/><path d="M-164.40 -33.23L-149.25 -34.49L-149.25 31.79L-164.40 30.54z" fill="url(#mG)"/><path d="M-177.04 -31.94L-161.90 -33.44L-161.90 30.76L-177.04 29.34z" fill="url(#mG)"/><path d="M-189.69 -30.51L-174.54 -32.23L-174.54 29.58L-189.69 28.14z" fill="url(#mG)"/><path d="M-202.33 -29.07L-187.19 -30.79L-187.19 28.38L-202.33 26.94z" fill="url(#mG)"/><path d="M-214.98 -27.63L-199.83 -29.35L-199.83 27.18L-214.98 25.74z" fill="url(#mG)"/><path d="M-227.62 -25.91L-212.48 -27.92L-212.48 25.98L-227.62 24.51z" fill="url(#mG)"/><path d="M-240.27 -24.11L-225.12 -26.27L-225.12 24.75L-240.27 23.26z" fill="url(#mG)"/><path d="M-252.92 -22.31L-237.77 -24.47L-237.77 23.51L-252.92 22.02z" fill="url(#mG)"/><path d="M-265.56 -20.51L-250.42 -22.66L-250.42 22.26L-265.56 20.78z" fill="url(#mG)"/><path d="M-278.21 -18.85L-263.06 -20.86L-263.06 21.02L-278.21 19.47z" fill="url(#mG)"/><path d="M-290.85 -17.20L-275.71 -19.18L-275.71 19.74L-290.85 18.13z" fill="url(#mG)"/><path d="M-303.50 -15.55L-288.35 -17.53L-288.35 18.39L-303.50 17.00z" fill="url(#mG)"/><path d="M-303.0 -15.5A7.21 16.2 0 0 0 -300.6 17.0z" fill="url(#mG)"/><path d="M-303.0 -15.5A7.21 16.2 0 0 0 -300.6 17.0" fill="none" stroke="#23262c" stroke-width="0.9"/><path d="M-2 -43.2L284 -42.6L284 42.9L-2 43.2z" fill="url(#mG)"/><path d="M3 -43.3A19.27 43.3 0 0 0 0 43.3" fill="none" stroke="#1d2025" stroke-width="0.9"/></g>
<path d="M848.2 457.6L872.2 469.7L901.8 473.6L943.9 524.4L1002.1 530.5L1046.5 580.2L1106.9 585.2" fill="none" stroke="#17191d" stroke-width="2.700" stroke-linejoin="miter"/>
<path d="M848.2 457.6L872.2 469.7L901.8 473.6L943.9 524.4L1002.1 530.5L1046.5 580.2L1106.9 585.2" fill="none" stroke="#747c89" stroke-width="0.7" stroke-linejoin="miter" opacity="0.75"/>
<g transform="translate(1125.7,590.7) rotate(27.0)"><path d="M281.8 -43.0A21.00 43.0 0 0 0 281.8 43.0L296.5 65.3A28.0 66.8 0 0 0 302.5 66.8A28.0 66.8 0 0 0 302.5 -66.8A28.0 66.8 0 0 0 297.5 -65.8z" fill="url(#mBack)" stroke="#1d2025" stroke-width="0.9" stroke-linejoin="round"/><path d="M281.8 -43.0A21.00 43.0 0 0 0 281.8 43.0" fill="none" stroke="#1d2025" stroke-width="0.9"/><ellipse cx="302.5" cy="0" rx="28.0" ry="66.8" fill="#3d414a" stroke="#1d2025" stroke-width="0.9"/><clipPath id="rimclip"><ellipse cx="303.3" cy="0" rx="26.0" ry="64.2"/></clipPath></g>
<g transform="translate(1125.7,590.7) rotate(27.0)"><ellipse cx="303.3" cy="0" rx="26.0" ry="64.2" fill="url(#mCone)" stroke="#1d2025" stroke-width="0.9"/><g clip-path="url(#rimclip)"><ellipse cx="284.2" cy="-0.5" rx="16.3" ry="38" fill="url(#mHole)" stroke="#1d2025" stroke-width="0.9"/></g></g></svg>
</body></html>
